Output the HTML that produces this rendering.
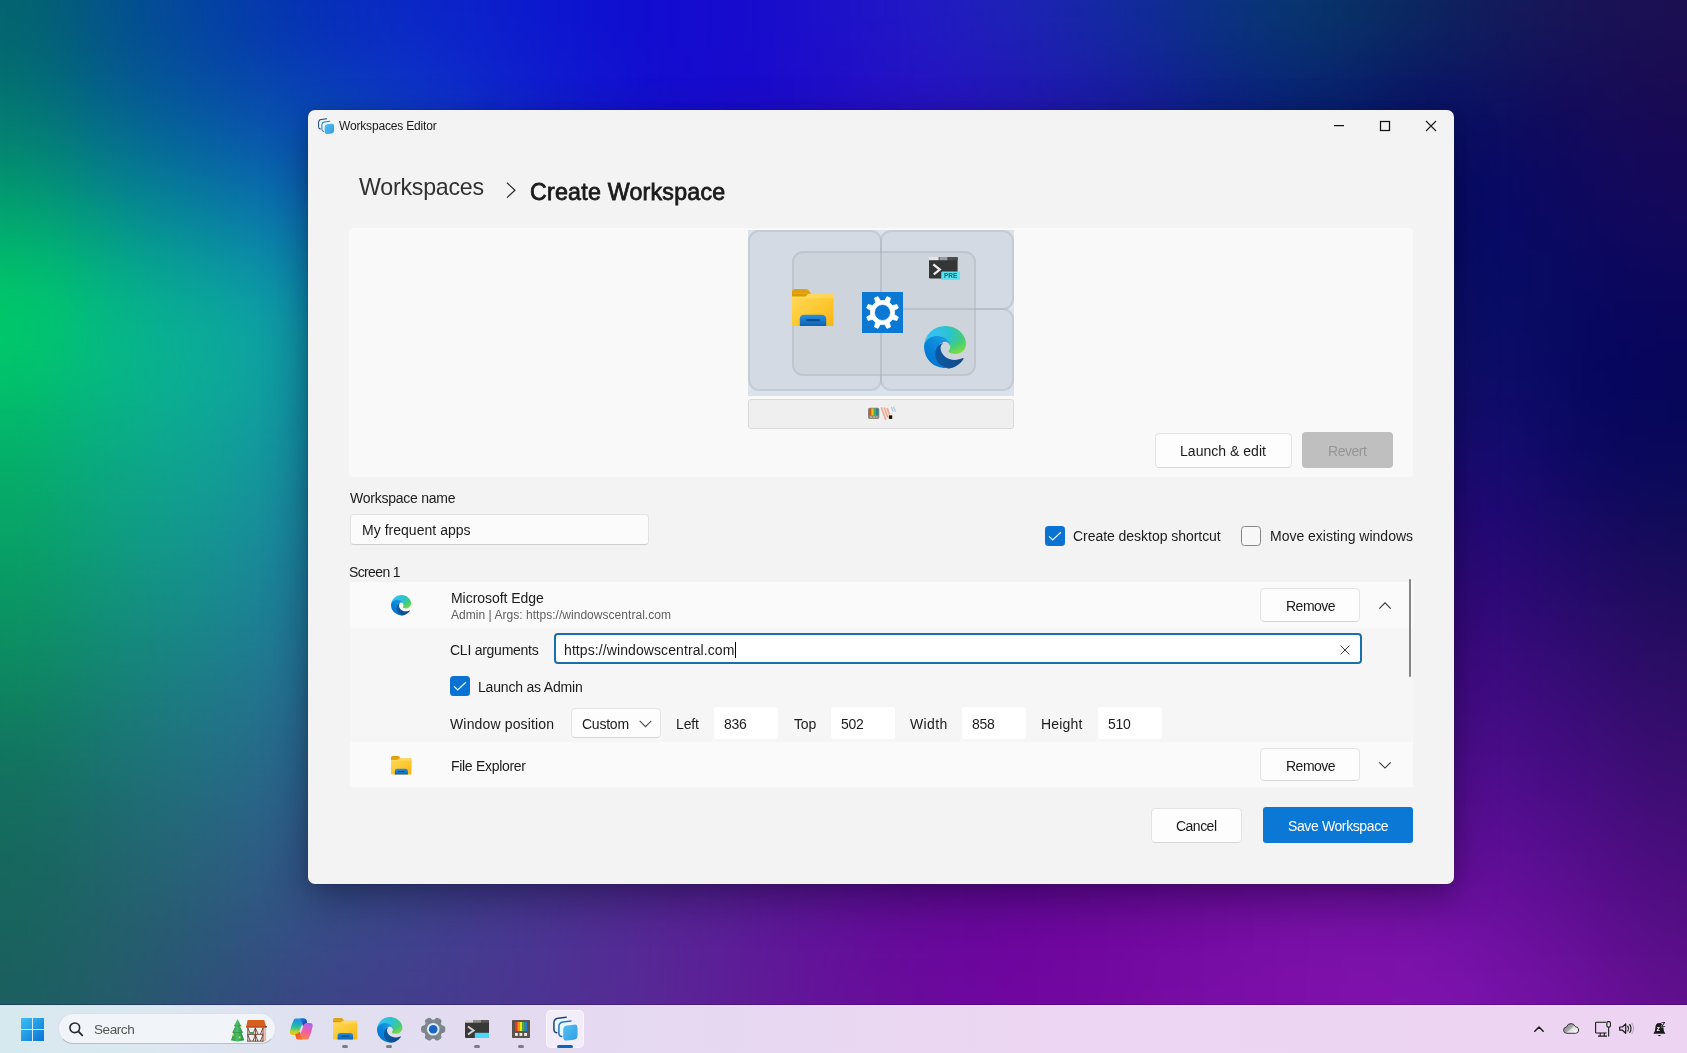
<!DOCTYPE html>
<html lang="en"><head><meta charset="utf-8"><title>Workspaces Editor</title><style>
*{margin:0;padding:0}
html,body{width:1687px;height:1053px;overflow:hidden;background:#1a1060;font-family:"Liberation Sans", sans-serif}
.desk{position:absolute;left:0;top:0;width:1687px;height:1053px;overflow:hidden}
.win{position:absolute;background:#f3f3f3;border-radius:7px;box-shadow:0 0 0 1px rgba(40,40,70,.16),0 16px 44px rgba(0,0,20,.36),0 3px 14px rgba(0,0,20,.11)}
.grp{position:absolute;left:0;top:0;width:0;height:0}
.t{position:absolute;white-space:pre;line-height:1;will-change:transform}
</style></head><body>
<div class="desk"><svg width="1687" height="1053" viewBox="0 0 1687 1053" style="position:absolute;left:0;top:0"><defs><filter id="bl" x="-10%" y="-10%" width="120%" height="120%" color-interpolation-filters="sRGB"><feGaussianBlur stdDeviation="28"/></filter></defs><g filter="url(#bl)"><rect x="-99.2" y="-100.3" width="50.2" height="50.7" fill="#03646f"/><rect x="-49.6" y="-100.3" width="50.2" height="50.7" fill="#03646f"/><rect x="0.0" y="-100.3" width="50.2" height="50.7" fill="#03646f"/><rect x="49.6" y="-100.3" width="50.2" height="50.7" fill="#035a7f"/><rect x="99.2" y="-100.3" width="50.2" height="50.7" fill="#03518e"/><rect x="148.9" y="-100.3" width="50.2" height="50.7" fill="#04489b"/><rect x="198.5" y="-100.3" width="50.2" height="50.7" fill="#0440a6"/><rect x="248.1" y="-100.3" width="50.2" height="50.7" fill="#0537af"/><rect x="297.7" y="-100.3" width="50.2" height="50.7" fill="#062fb8"/><rect x="347.3" y="-100.3" width="50.2" height="50.7" fill="#092bc1"/><rect x="396.9" y="-100.3" width="50.2" height="50.7" fill="#0b27c7"/><rect x="446.6" y="-100.3" width="50.2" height="50.7" fill="#0c21ca"/><rect x="496.2" y="-100.3" width="50.2" height="50.7" fill="#0c1bcd"/><rect x="545.8" y="-100.3" width="50.2" height="50.7" fill="#0d15cf"/><rect x="595.4" y="-100.3" width="50.2" height="50.7" fill="#0f0fd0"/><rect x="645.0" y="-100.3" width="50.2" height="50.7" fill="#130cd0"/><rect x="694.6" y="-100.3" width="50.2" height="50.7" fill="#160bce"/><rect x="744.3" y="-100.3" width="50.2" height="50.7" fill="#190dcc"/><rect x="793.9" y="-100.3" width="50.2" height="50.7" fill="#1c10ca"/><rect x="843.5" y="-100.3" width="50.2" height="50.7" fill="#2014c8"/><rect x="893.1" y="-100.3" width="50.2" height="50.7" fill="#2118c4"/><rect x="942.7" y="-100.3" width="50.2" height="50.7" fill="#201ebd"/><rect x="992.4" y="-100.3" width="50.2" height="50.7" fill="#1d23b5"/><rect x="1042.0" y="-100.3" width="50.2" height="50.7" fill="#1826ab"/><rect x="1091.6" y="-100.3" width="50.2" height="50.7" fill="#132aa0"/><rect x="1141.2" y="-100.3" width="50.2" height="50.7" fill="#0f2d92"/><rect x="1190.8" y="-100.3" width="50.2" height="50.7" fill="#0b3183"/><rect x="1240.4" y="-100.3" width="50.2" height="50.7" fill="#083576"/><rect x="1290.1" y="-100.3" width="50.2" height="50.7" fill="#08346c"/><rect x="1339.7" y="-100.3" width="50.2" height="50.7" fill="#092e65"/><rect x="1389.3" y="-100.3" width="50.2" height="50.7" fill="#0b2761"/><rect x="1438.9" y="-100.3" width="50.2" height="50.7" fill="#0f1f5e"/><rect x="1488.5" y="-100.3" width="50.2" height="50.7" fill="#14195b"/><rect x="1538.1" y="-100.3" width="50.2" height="50.7" fill="#181558"/><rect x="1587.8" y="-100.3" width="50.2" height="50.7" fill="#191255"/><rect x="1637.4" y="-100.3" width="50.2" height="50.7" fill="#1b0f52"/><rect x="1687.0" y="-100.3" width="50.2" height="50.7" fill="#1b0f52"/><rect x="1736.6" y="-100.3" width="50.2" height="50.7" fill="#1b0f52"/><rect x="-99.2" y="-50.1" width="50.2" height="50.7" fill="#03646f"/><rect x="-49.6" y="-50.1" width="50.2" height="50.7" fill="#03646f"/><rect x="0.0" y="-50.1" width="50.2" height="50.7" fill="#03646f"/><rect x="49.6" y="-50.1" width="50.2" height="50.7" fill="#035a7f"/><rect x="99.2" y="-50.1" width="50.2" height="50.7" fill="#03518e"/><rect x="148.9" y="-50.1" width="50.2" height="50.7" fill="#04489b"/><rect x="198.5" y="-50.1" width="50.2" height="50.7" fill="#0440a6"/><rect x="248.1" y="-50.1" width="50.2" height="50.7" fill="#0537af"/><rect x="297.7" y="-50.1" width="50.2" height="50.7" fill="#062fb8"/><rect x="347.3" y="-50.1" width="50.2" height="50.7" fill="#092bc1"/><rect x="396.9" y="-50.1" width="50.2" height="50.7" fill="#0b27c7"/><rect x="446.6" y="-50.1" width="50.2" height="50.7" fill="#0c21ca"/><rect x="496.2" y="-50.1" width="50.2" height="50.7" fill="#0c1bcd"/><rect x="545.8" y="-50.1" width="50.2" height="50.7" fill="#0d15cf"/><rect x="595.4" y="-50.1" width="50.2" height="50.7" fill="#0f0fd0"/><rect x="645.0" y="-50.1" width="50.2" height="50.7" fill="#130cd0"/><rect x="694.6" y="-50.1" width="50.2" height="50.7" fill="#160bce"/><rect x="744.3" y="-50.1" width="50.2" height="50.7" fill="#190dcc"/><rect x="793.9" y="-50.1" width="50.2" height="50.7" fill="#1c10ca"/><rect x="843.5" y="-50.1" width="50.2" height="50.7" fill="#2014c8"/><rect x="893.1" y="-50.1" width="50.2" height="50.7" fill="#2118c4"/><rect x="942.7" y="-50.1" width="50.2" height="50.7" fill="#201ebd"/><rect x="992.4" y="-50.1" width="50.2" height="50.7" fill="#1d23b5"/><rect x="1042.0" y="-50.1" width="50.2" height="50.7" fill="#1826ab"/><rect x="1091.6" y="-50.1" width="50.2" height="50.7" fill="#132aa0"/><rect x="1141.2" y="-50.1" width="50.2" height="50.7" fill="#0f2d92"/><rect x="1190.8" y="-50.1" width="50.2" height="50.7" fill="#0b3183"/><rect x="1240.4" y="-50.1" width="50.2" height="50.7" fill="#083576"/><rect x="1290.1" y="-50.1" width="50.2" height="50.7" fill="#08346c"/><rect x="1339.7" y="-50.1" width="50.2" height="50.7" fill="#092e65"/><rect x="1389.3" y="-50.1" width="50.2" height="50.7" fill="#0b2761"/><rect x="1438.9" y="-50.1" width="50.2" height="50.7" fill="#0f1f5e"/><rect x="1488.5" y="-50.1" width="50.2" height="50.7" fill="#14195b"/><rect x="1538.1" y="-50.1" width="50.2" height="50.7" fill="#181558"/><rect x="1587.8" y="-50.1" width="50.2" height="50.7" fill="#191255"/><rect x="1637.4" y="-50.1" width="50.2" height="50.7" fill="#1b0f52"/><rect x="1687.0" y="-50.1" width="50.2" height="50.7" fill="#1b0f52"/><rect x="1736.6" y="-50.1" width="50.2" height="50.7" fill="#1b0f52"/><rect x="-99.2" y="0.0" width="50.2" height="50.7" fill="#03646f"/><rect x="-49.6" y="0.0" width="50.2" height="50.7" fill="#03646f"/><rect x="0.0" y="0.0" width="50.2" height="50.7" fill="#03646f"/><rect x="49.6" y="0.0" width="50.2" height="50.7" fill="#035a7f"/><rect x="99.2" y="0.0" width="50.2" height="50.7" fill="#03518e"/><rect x="148.9" y="0.0" width="50.2" height="50.7" fill="#04489b"/><rect x="198.5" y="0.0" width="50.2" height="50.7" fill="#0440a6"/><rect x="248.1" y="0.0" width="50.2" height="50.7" fill="#0537af"/><rect x="297.7" y="0.0" width="50.2" height="50.7" fill="#062fb8"/><rect x="347.3" y="0.0" width="50.2" height="50.7" fill="#092bc1"/><rect x="396.9" y="0.0" width="50.2" height="50.7" fill="#0b27c7"/><rect x="446.6" y="0.0" width="50.2" height="50.7" fill="#0c21ca"/><rect x="496.2" y="0.0" width="50.2" height="50.7" fill="#0c1bcd"/><rect x="545.8" y="0.0" width="50.2" height="50.7" fill="#0d15cf"/><rect x="595.4" y="0.0" width="50.2" height="50.7" fill="#0f0fd0"/><rect x="645.0" y="0.0" width="50.2" height="50.7" fill="#130cd0"/><rect x="694.6" y="0.0" width="50.2" height="50.7" fill="#160bce"/><rect x="744.3" y="0.0" width="50.2" height="50.7" fill="#190dcc"/><rect x="793.9" y="0.0" width="50.2" height="50.7" fill="#1c10ca"/><rect x="843.5" y="0.0" width="50.2" height="50.7" fill="#2014c8"/><rect x="893.1" y="0.0" width="50.2" height="50.7" fill="#2118c4"/><rect x="942.7" y="0.0" width="50.2" height="50.7" fill="#201ebd"/><rect x="992.4" y="0.0" width="50.2" height="50.7" fill="#1d23b5"/><rect x="1042.0" y="0.0" width="50.2" height="50.7" fill="#1826ab"/><rect x="1091.6" y="0.0" width="50.2" height="50.7" fill="#132aa0"/><rect x="1141.2" y="0.0" width="50.2" height="50.7" fill="#0f2d92"/><rect x="1190.8" y="0.0" width="50.2" height="50.7" fill="#0b3183"/><rect x="1240.4" y="0.0" width="50.2" height="50.7" fill="#083576"/><rect x="1290.1" y="0.0" width="50.2" height="50.7" fill="#08346c"/><rect x="1339.7" y="0.0" width="50.2" height="50.7" fill="#092e65"/><rect x="1389.3" y="0.0" width="50.2" height="50.7" fill="#0b2761"/><rect x="1438.9" y="0.0" width="50.2" height="50.7" fill="#0f1f5e"/><rect x="1488.5" y="0.0" width="50.2" height="50.7" fill="#14195b"/><rect x="1538.1" y="0.0" width="50.2" height="50.7" fill="#181558"/><rect x="1587.8" y="0.0" width="50.2" height="50.7" fill="#191255"/><rect x="1637.4" y="0.0" width="50.2" height="50.7" fill="#1b0f52"/><rect x="1687.0" y="0.0" width="50.2" height="50.7" fill="#1b0f52"/><rect x="1736.6" y="0.0" width="50.2" height="50.7" fill="#1b0f52"/><rect x="-99.2" y="50.1" width="50.2" height="50.7" fill="#036e71"/><rect x="-49.6" y="50.1" width="50.2" height="50.7" fill="#036e71"/><rect x="0.0" y="50.1" width="50.2" height="50.7" fill="#036e71"/><rect x="49.6" y="50.1" width="50.2" height="50.7" fill="#036380"/><rect x="99.2" y="50.1" width="50.2" height="50.7" fill="#04598f"/><rect x="148.9" y="50.1" width="50.2" height="50.7" fill="#04519b"/><rect x="198.5" y="50.1" width="50.2" height="50.7" fill="#0649a5"/><rect x="248.1" y="50.1" width="50.2" height="50.7" fill="#0742af"/><rect x="297.7" y="50.1" width="50.2" height="50.7" fill="#093bb8"/><rect x="347.3" y="50.1" width="50.2" height="50.7" fill="#0b35c1"/><rect x="396.9" y="50.1" width="50.2" height="50.7" fill="#0d2fc7"/><rect x="446.6" y="50.1" width="50.2" height="50.7" fill="#0d27ca"/><rect x="496.2" y="50.1" width="50.2" height="50.7" fill="#0e1fcd"/><rect x="545.8" y="50.1" width="50.2" height="50.7" fill="#1017cf"/><rect x="595.4" y="50.1" width="50.2" height="50.7" fill="#1211d0"/><rect x="645.0" y="50.1" width="50.2" height="50.7" fill="#140cd0"/><rect x="694.6" y="50.1" width="50.2" height="50.7" fill="#170ace"/><rect x="744.3" y="50.1" width="50.2" height="50.7" fill="#1a0bcc"/><rect x="793.9" y="50.1" width="50.2" height="50.7" fill="#1e0ec9"/><rect x="843.5" y="50.1" width="50.2" height="50.7" fill="#2210c7"/><rect x="893.1" y="50.1" width="50.2" height="50.7" fill="#2514c3"/><rect x="942.7" y="50.1" width="50.2" height="50.7" fill="#2317bd"/><rect x="992.4" y="50.1" width="50.2" height="50.7" fill="#201ab5"/><rect x="1042.0" y="50.1" width="50.2" height="50.7" fill="#1c1dab"/><rect x="1091.6" y="50.1" width="50.2" height="50.7" fill="#171fa0"/><rect x="1141.2" y="50.1" width="50.2" height="50.7" fill="#112392"/><rect x="1190.8" y="50.1" width="50.2" height="50.7" fill="#0c2784"/><rect x="1240.4" y="50.1" width="50.2" height="50.7" fill="#082878"/><rect x="1290.1" y="50.1" width="50.2" height="50.7" fill="#08286e"/><rect x="1339.7" y="50.1" width="50.2" height="50.7" fill="#092268"/><rect x="1389.3" y="50.1" width="50.2" height="50.7" fill="#0a1a64"/><rect x="1438.9" y="50.1" width="50.2" height="50.7" fill="#0d1661"/><rect x="1488.5" y="50.1" width="50.2" height="50.7" fill="#11125d"/><rect x="1538.1" y="50.1" width="50.2" height="50.7" fill="#140e5a"/><rect x="1587.8" y="50.1" width="50.2" height="50.7" fill="#170d56"/><rect x="1637.4" y="50.1" width="50.2" height="50.7" fill="#1a0b52"/><rect x="1687.0" y="50.1" width="50.2" height="50.7" fill="#1a0b52"/><rect x="1736.6" y="50.1" width="50.2" height="50.7" fill="#1a0b52"/><rect x="-99.2" y="100.3" width="50.2" height="50.7" fill="#037d71"/><rect x="-49.6" y="100.3" width="50.2" height="50.7" fill="#037d71"/><rect x="0.0" y="100.3" width="50.2" height="50.7" fill="#037d71"/><rect x="49.6" y="100.3" width="50.2" height="50.7" fill="#047280"/><rect x="99.2" y="100.3" width="50.2" height="50.7" fill="#05688f"/><rect x="148.9" y="100.3" width="50.2" height="50.7" fill="#05609a"/><rect x="198.5" y="100.3" width="50.2" height="50.7" fill="#0758a5"/><rect x="248.1" y="100.3" width="50.2" height="50.7" fill="#0951ae"/><rect x="297.7" y="100.3" width="50.2" height="50.7" fill="#0a4ab6"/><rect x="347.3" y="100.3" width="50.2" height="50.7" fill="#0c41be"/><rect x="396.9" y="100.3" width="50.2" height="50.7" fill="#0d38c5"/><rect x="446.6" y="100.3" width="50.2" height="50.7" fill="#0f2fc9"/><rect x="496.2" y="100.3" width="50.2" height="50.7" fill="#1024cc"/><rect x="545.8" y="100.3" width="50.2" height="50.7" fill="#111bce"/><rect x="595.4" y="100.3" width="50.2" height="50.7" fill="#1313cf"/><rect x="645.0" y="100.3" width="50.2" height="50.7" fill="#160ece"/><rect x="694.6" y="100.3" width="50.2" height="50.7" fill="#190ccd"/><rect x="744.3" y="100.3" width="50.2" height="50.7" fill="#1c0cca"/><rect x="793.9" y="100.3" width="50.2" height="50.7" fill="#1f0dc7"/><rect x="843.5" y="100.3" width="50.2" height="50.7" fill="#230ec4"/><rect x="893.1" y="100.3" width="50.2" height="50.7" fill="#2610c0"/><rect x="942.7" y="100.3" width="50.2" height="50.7" fill="#2412ba"/><rect x="992.4" y="100.3" width="50.2" height="50.7" fill="#2214b2"/><rect x="1042.0" y="100.3" width="50.2" height="50.7" fill="#1d16a9"/><rect x="1091.6" y="100.3" width="50.2" height="50.7" fill="#19189e"/><rect x="1141.2" y="100.3" width="50.2" height="50.7" fill="#131b91"/><rect x="1190.8" y="100.3" width="50.2" height="50.7" fill="#0d1d85"/><rect x="1240.4" y="100.3" width="50.2" height="50.7" fill="#0a1d7a"/><rect x="1290.1" y="100.3" width="50.2" height="50.7" fill="#081d72"/><rect x="1339.7" y="100.3" width="50.2" height="50.7" fill="#08186c"/><rect x="1389.3" y="100.3" width="50.2" height="50.7" fill="#091268"/><rect x="1438.9" y="100.3" width="50.2" height="50.7" fill="#0a0f64"/><rect x="1488.5" y="100.3" width="50.2" height="50.7" fill="#0d0c60"/><rect x="1538.1" y="100.3" width="50.2" height="50.7" fill="#110a5c"/><rect x="1587.8" y="100.3" width="50.2" height="50.7" fill="#150a59"/><rect x="1637.4" y="100.3" width="50.2" height="50.7" fill="#180955"/><rect x="1687.0" y="100.3" width="50.2" height="50.7" fill="#180955"/><rect x="1736.6" y="100.3" width="50.2" height="50.7" fill="#180955"/><rect x="-99.2" y="150.4" width="50.2" height="50.7" fill="#029270"/><rect x="-49.6" y="150.4" width="50.2" height="50.7" fill="#029270"/><rect x="0.0" y="150.4" width="50.2" height="50.7" fill="#029270"/><rect x="49.6" y="150.4" width="50.2" height="50.7" fill="#04877f"/><rect x="99.2" y="150.4" width="50.2" height="50.7" fill="#057d8e"/><rect x="148.9" y="150.4" width="50.2" height="50.7" fill="#06749a"/><rect x="198.5" y="150.4" width="50.2" height="50.7" fill="#086ca4"/><rect x="248.1" y="150.4" width="50.2" height="50.7" fill="#0965ad"/><rect x="297.7" y="150.4" width="50.2" height="50.7" fill="#0b5bb5"/><rect x="347.3" y="150.4" width="50.2" height="50.7" fill="#0d4fbc"/><rect x="396.9" y="150.4" width="50.2" height="50.7" fill="#0e43c2"/><rect x="446.6" y="150.4" width="50.2" height="50.7" fill="#1036c6"/><rect x="496.2" y="150.4" width="50.2" height="50.7" fill="#1129ca"/><rect x="545.8" y="150.4" width="50.2" height="50.7" fill="#121ecc"/><rect x="595.4" y="150.4" width="50.2" height="50.7" fill="#1416cd"/><rect x="645.0" y="150.4" width="50.2" height="50.7" fill="#1710cc"/><rect x="694.6" y="150.4" width="50.2" height="50.7" fill="#1a0dca"/><rect x="744.3" y="150.4" width="50.2" height="50.7" fill="#1d0dc7"/><rect x="793.9" y="150.4" width="50.2" height="50.7" fill="#200dc4"/><rect x="843.5" y="150.4" width="50.2" height="50.7" fill="#230ec1"/><rect x="893.1" y="150.4" width="50.2" height="50.7" fill="#240fbc"/><rect x="942.7" y="150.4" width="50.2" height="50.7" fill="#2411b6"/><rect x="992.4" y="150.4" width="50.2" height="50.7" fill="#2112ae"/><rect x="1042.0" y="150.4" width="50.2" height="50.7" fill="#1d13a5"/><rect x="1091.6" y="150.4" width="50.2" height="50.7" fill="#19149a"/><rect x="1141.2" y="150.4" width="50.2" height="50.7" fill="#13168f"/><rect x="1190.8" y="150.4" width="50.2" height="50.7" fill="#0f1784"/><rect x="1240.4" y="150.4" width="50.2" height="50.7" fill="#0b177b"/><rect x="1290.1" y="150.4" width="50.2" height="50.7" fill="#091674"/><rect x="1339.7" y="150.4" width="50.2" height="50.7" fill="#08136e"/><rect x="1389.3" y="150.4" width="50.2" height="50.7" fill="#080f6a"/><rect x="1438.9" y="150.4" width="50.2" height="50.7" fill="#070b67"/><rect x="1488.5" y="150.4" width="50.2" height="50.7" fill="#090963"/><rect x="1538.1" y="150.4" width="50.2" height="50.7" fill="#0e095f"/><rect x="1587.8" y="150.4" width="50.2" height="50.7" fill="#12095c"/><rect x="1637.4" y="150.4" width="50.2" height="50.7" fill="#160859"/><rect x="1687.0" y="150.4" width="50.2" height="50.7" fill="#160859"/><rect x="1736.6" y="150.4" width="50.2" height="50.7" fill="#160859"/><rect x="-99.2" y="200.6" width="50.2" height="50.7" fill="#02a96e"/><rect x="-49.6" y="200.6" width="50.2" height="50.7" fill="#02a96e"/><rect x="0.0" y="200.6" width="50.2" height="50.7" fill="#02a96e"/><rect x="49.6" y="200.6" width="50.2" height="50.7" fill="#039f7c"/><rect x="99.2" y="200.6" width="50.2" height="50.7" fill="#05958b"/><rect x="148.9" y="200.6" width="50.2" height="50.7" fill="#078c98"/><rect x="198.5" y="200.6" width="50.2" height="50.7" fill="#0983a2"/><rect x="248.1" y="200.6" width="50.2" height="50.7" fill="#0b7baa"/><rect x="297.7" y="200.6" width="50.2" height="50.7" fill="#0c6eb2"/><rect x="347.3" y="200.6" width="50.2" height="50.7" fill="#0e5eb9"/><rect x="396.9" y="200.6" width="50.2" height="50.7" fill="#0f4dbf"/><rect x="446.6" y="200.6" width="50.2" height="50.7" fill="#113dc3"/><rect x="496.2" y="200.6" width="50.2" height="50.7" fill="#122ec7"/><rect x="545.8" y="200.6" width="50.2" height="50.7" fill="#1321ca"/><rect x="595.4" y="200.6" width="50.2" height="50.7" fill="#1517cb"/><rect x="645.0" y="200.6" width="50.2" height="50.7" fill="#1812c9"/><rect x="694.6" y="200.6" width="50.2" height="50.7" fill="#1b0fc7"/><rect x="744.3" y="200.6" width="50.2" height="50.7" fill="#1e0ec4"/><rect x="793.9" y="200.6" width="50.2" height="50.7" fill="#210ec1"/><rect x="843.5" y="200.6" width="50.2" height="50.7" fill="#230fbd"/><rect x="893.1" y="200.6" width="50.2" height="50.7" fill="#240fb8"/><rect x="942.7" y="200.6" width="50.2" height="50.7" fill="#2310b1"/><rect x="992.4" y="200.6" width="50.2" height="50.7" fill="#2110a9"/><rect x="1042.0" y="200.6" width="50.2" height="50.7" fill="#1d11a0"/><rect x="1091.6" y="200.6" width="50.2" height="50.7" fill="#191296"/><rect x="1141.2" y="200.6" width="50.2" height="50.7" fill="#14138c"/><rect x="1190.8" y="200.6" width="50.2" height="50.7" fill="#0f1383"/><rect x="1240.4" y="200.6" width="50.2" height="50.7" fill="#0d137b"/><rect x="1290.1" y="200.6" width="50.2" height="50.7" fill="#0b1274"/><rect x="1339.7" y="200.6" width="50.2" height="50.7" fill="#09106f"/><rect x="1389.3" y="200.6" width="50.2" height="50.7" fill="#080d6b"/><rect x="1438.9" y="200.6" width="50.2" height="50.7" fill="#070b67"/><rect x="1488.5" y="200.6" width="50.2" height="50.7" fill="#080964"/><rect x="1538.1" y="200.6" width="50.2" height="50.7" fill="#0b0960"/><rect x="1587.8" y="200.6" width="50.2" height="50.7" fill="#0f085e"/><rect x="1637.4" y="200.6" width="50.2" height="50.7" fill="#12085b"/><rect x="1687.0" y="200.6" width="50.2" height="50.7" fill="#12085b"/><rect x="1736.6" y="200.6" width="50.2" height="50.7" fill="#12085b"/><rect x="-99.2" y="250.7" width="50.2" height="50.7" fill="#00c06b"/><rect x="-49.6" y="250.7" width="50.2" height="50.7" fill="#00c06b"/><rect x="0.0" y="250.7" width="50.2" height="50.7" fill="#00c06b"/><rect x="49.6" y="250.7" width="50.2" height="50.7" fill="#02b778"/><rect x="99.2" y="250.7" width="50.2" height="50.7" fill="#05ab88"/><rect x="148.9" y="250.7" width="50.2" height="50.7" fill="#08a395"/><rect x="198.5" y="250.7" width="50.2" height="50.7" fill="#0a9a9f"/><rect x="248.1" y="250.7" width="50.2" height="50.7" fill="#0c91a8"/><rect x="297.7" y="250.7" width="50.2" height="50.7" fill="#0e7faf"/><rect x="347.3" y="250.7" width="50.2" height="50.7" fill="#106bb6"/><rect x="396.9" y="250.7" width="50.2" height="50.7" fill="#1157bb"/><rect x="446.6" y="250.7" width="50.2" height="50.7" fill="#1244c0"/><rect x="496.2" y="250.7" width="50.2" height="50.7" fill="#1333c4"/><rect x="545.8" y="250.7" width="50.2" height="50.7" fill="#1423c7"/><rect x="595.4" y="250.7" width="50.2" height="50.7" fill="#1618c8"/><rect x="645.0" y="250.7" width="50.2" height="50.7" fill="#1914c6"/><rect x="694.6" y="250.7" width="50.2" height="50.7" fill="#1d11c3"/><rect x="744.3" y="250.7" width="50.2" height="50.7" fill="#2010c0"/><rect x="793.9" y="250.7" width="50.2" height="50.7" fill="#220fbc"/><rect x="843.5" y="250.7" width="50.2" height="50.7" fill="#2310b8"/><rect x="893.1" y="250.7" width="50.2" height="50.7" fill="#2410b3"/><rect x="942.7" y="250.7" width="50.2" height="50.7" fill="#2310ac"/><rect x="992.4" y="250.7" width="50.2" height="50.7" fill="#2110a5"/><rect x="1042.0" y="250.7" width="50.2" height="50.7" fill="#1e109c"/><rect x="1091.6" y="250.7" width="50.2" height="50.7" fill="#191093"/><rect x="1141.2" y="250.7" width="50.2" height="50.7" fill="#141189"/><rect x="1190.8" y="250.7" width="50.2" height="50.7" fill="#101180"/><rect x="1240.4" y="250.7" width="50.2" height="50.7" fill="#0e117a"/><rect x="1290.1" y="250.7" width="50.2" height="50.7" fill="#0d1075"/><rect x="1339.7" y="250.7" width="50.2" height="50.7" fill="#0b0f70"/><rect x="1389.3" y="250.7" width="50.2" height="50.7" fill="#0a0e6b"/><rect x="1438.9" y="250.7" width="50.2" height="50.7" fill="#090d67"/><rect x="1488.5" y="250.7" width="50.2" height="50.7" fill="#080b63"/><rect x="1538.1" y="250.7" width="50.2" height="50.7" fill="#090961"/><rect x="1587.8" y="250.7" width="50.2" height="50.7" fill="#0b075e"/><rect x="1637.4" y="250.7" width="50.2" height="50.7" fill="#0d075c"/><rect x="1687.0" y="250.7" width="50.2" height="50.7" fill="#0d075c"/><rect x="1736.6" y="250.7" width="50.2" height="50.7" fill="#0d075c"/><rect x="-99.2" y="300.9" width="50.2" height="50.7" fill="#00c969"/><rect x="-49.6" y="300.9" width="50.2" height="50.7" fill="#00c969"/><rect x="0.0" y="300.9" width="50.2" height="50.7" fill="#00c969"/><rect x="49.6" y="300.9" width="50.2" height="50.7" fill="#02c078"/><rect x="99.2" y="300.9" width="50.2" height="50.7" fill="#06b689"/><rect x="148.9" y="300.9" width="50.2" height="50.7" fill="#09af93"/><rect x="198.5" y="300.9" width="50.2" height="50.7" fill="#0ba89c"/><rect x="248.1" y="300.9" width="50.2" height="50.7" fill="#0e9fa4"/><rect x="297.7" y="300.9" width="50.2" height="50.7" fill="#108aac"/><rect x="347.3" y="300.9" width="50.2" height="50.7" fill="#1273b2"/><rect x="396.9" y="300.9" width="50.2" height="50.7" fill="#135eb7"/><rect x="446.6" y="300.9" width="50.2" height="50.7" fill="#144abb"/><rect x="496.2" y="300.9" width="50.2" height="50.7" fill="#1638bf"/><rect x="545.8" y="300.9" width="50.2" height="50.7" fill="#1727c2"/><rect x="595.4" y="300.9" width="50.2" height="50.7" fill="#191cc2"/><rect x="645.0" y="300.9" width="50.2" height="50.7" fill="#1c17c0"/><rect x="694.6" y="300.9" width="50.2" height="50.7" fill="#1f13be"/><rect x="744.3" y="300.9" width="50.2" height="50.7" fill="#2212ba"/><rect x="793.9" y="300.9" width="50.2" height="50.7" fill="#2411b7"/><rect x="843.5" y="300.9" width="50.2" height="50.7" fill="#2511b3"/><rect x="893.1" y="300.9" width="50.2" height="50.7" fill="#2511ae"/><rect x="942.7" y="300.9" width="50.2" height="50.7" fill="#2510a8"/><rect x="992.4" y="300.9" width="50.2" height="50.7" fill="#230fa0"/><rect x="1042.0" y="300.9" width="50.2" height="50.7" fill="#200f98"/><rect x="1091.6" y="300.9" width="50.2" height="50.7" fill="#1c0f90"/><rect x="1141.2" y="300.9" width="50.2" height="50.7" fill="#170f87"/><rect x="1190.8" y="300.9" width="50.2" height="50.7" fill="#130f80"/><rect x="1240.4" y="300.9" width="50.2" height="50.7" fill="#120f7a"/><rect x="1290.1" y="300.9" width="50.2" height="50.7" fill="#110e76"/><rect x="1339.7" y="300.9" width="50.2" height="50.7" fill="#0f0e71"/><rect x="1389.3" y="300.9" width="50.2" height="50.7" fill="#0d0e6d"/><rect x="1438.9" y="300.9" width="50.2" height="50.7" fill="#0b0e68"/><rect x="1488.5" y="300.9" width="50.2" height="50.7" fill="#090c64"/><rect x="1538.1" y="300.9" width="50.2" height="50.7" fill="#080961"/><rect x="1587.8" y="300.9" width="50.2" height="50.7" fill="#07065e"/><rect x="1637.4" y="300.9" width="50.2" height="50.7" fill="#09065c"/><rect x="1687.0" y="300.9" width="50.2" height="50.7" fill="#09065c"/><rect x="1736.6" y="300.9" width="50.2" height="50.7" fill="#09065c"/><rect x="-99.2" y="351.0" width="50.2" height="50.7" fill="#01c26b"/><rect x="-49.6" y="351.0" width="50.2" height="50.7" fill="#01c26b"/><rect x="0.0" y="351.0" width="50.2" height="50.7" fill="#01c26b"/><rect x="49.6" y="351.0" width="50.2" height="50.7" fill="#04bc79"/><rect x="99.2" y="351.0" width="50.2" height="50.7" fill="#07b588"/><rect x="148.9" y="351.0" width="50.2" height="50.7" fill="#0aaf92"/><rect x="198.5" y="351.0" width="50.2" height="50.7" fill="#0da99a"/><rect x="248.1" y="351.0" width="50.2" height="50.7" fill="#0f9ea1"/><rect x="297.7" y="351.0" width="50.2" height="50.7" fill="#128ba8"/><rect x="347.3" y="351.0" width="50.2" height="50.7" fill="#1477ae"/><rect x="396.9" y="351.0" width="50.2" height="50.7" fill="#1662b2"/><rect x="446.6" y="351.0" width="50.2" height="50.7" fill="#174eb6"/><rect x="496.2" y="351.0" width="50.2" height="50.7" fill="#193cb9"/><rect x="545.8" y="351.0" width="50.2" height="50.7" fill="#1b2dba"/><rect x="595.4" y="351.0" width="50.2" height="50.7" fill="#1d22bb"/><rect x="645.0" y="351.0" width="50.2" height="50.7" fill="#201bb9"/><rect x="694.6" y="351.0" width="50.2" height="50.7" fill="#2316b7"/><rect x="744.3" y="351.0" width="50.2" height="50.7" fill="#2513b4"/><rect x="793.9" y="351.0" width="50.2" height="50.7" fill="#2712b1"/><rect x="843.5" y="351.0" width="50.2" height="50.7" fill="#2811ad"/><rect x="893.1" y="351.0" width="50.2" height="50.7" fill="#2810a8"/><rect x="942.7" y="351.0" width="50.2" height="50.7" fill="#280fa3"/><rect x="992.4" y="351.0" width="50.2" height="50.7" fill="#260e9c"/><rect x="1042.0" y="351.0" width="50.2" height="50.7" fill="#230e95"/><rect x="1091.6" y="351.0" width="50.2" height="50.7" fill="#200e8d"/><rect x="1141.2" y="351.0" width="50.2" height="50.7" fill="#1c0e86"/><rect x="1190.8" y="351.0" width="50.2" height="50.7" fill="#190d80"/><rect x="1240.4" y="351.0" width="50.2" height="50.7" fill="#170d7b"/><rect x="1290.1" y="351.0" width="50.2" height="50.7" fill="#160d77"/><rect x="1339.7" y="351.0" width="50.2" height="50.7" fill="#140d73"/><rect x="1389.3" y="351.0" width="50.2" height="50.7" fill="#120e6f"/><rect x="1438.9" y="351.0" width="50.2" height="50.7" fill="#0f0e6a"/><rect x="1488.5" y="351.0" width="50.2" height="50.7" fill="#0c0c66"/><rect x="1538.1" y="351.0" width="50.2" height="50.7" fill="#080862"/><rect x="1587.8" y="351.0" width="50.2" height="50.7" fill="#06055e"/><rect x="1637.4" y="351.0" width="50.2" height="50.7" fill="#07065b"/><rect x="1687.0" y="351.0" width="50.2" height="50.7" fill="#07065b"/><rect x="1736.6" y="351.0" width="50.2" height="50.7" fill="#07065b"/><rect x="-99.2" y="401.1" width="50.2" height="50.7" fill="#03b66a"/><rect x="-49.6" y="401.1" width="50.2" height="50.7" fill="#03b66a"/><rect x="0.0" y="401.1" width="50.2" height="50.7" fill="#03b66a"/><rect x="49.6" y="401.1" width="50.2" height="50.7" fill="#06b279"/><rect x="99.2" y="401.1" width="50.2" height="50.7" fill="#0aae87"/><rect x="148.9" y="401.1" width="50.2" height="50.7" fill="#0caa91"/><rect x="198.5" y="401.1" width="50.2" height="50.7" fill="#0fa399"/><rect x="248.1" y="401.1" width="50.2" height="50.7" fill="#1298a0"/><rect x="297.7" y="401.1" width="50.2" height="50.7" fill="#1489a5"/><rect x="347.3" y="401.1" width="50.2" height="50.7" fill="#1776aa"/><rect x="396.9" y="401.1" width="50.2" height="50.7" fill="#1963ae"/><rect x="446.6" y="401.1" width="50.2" height="50.7" fill="#1b51b0"/><rect x="496.2" y="401.1" width="50.2" height="50.7" fill="#1d40b2"/><rect x="545.8" y="401.1" width="50.2" height="50.7" fill="#1f31b3"/><rect x="595.4" y="401.1" width="50.2" height="50.7" fill="#2126b3"/><rect x="645.0" y="401.1" width="50.2" height="50.7" fill="#241eb2"/><rect x="694.6" y="401.1" width="50.2" height="50.7" fill="#2719b1"/><rect x="744.3" y="401.1" width="50.2" height="50.7" fill="#2915ae"/><rect x="793.9" y="401.1" width="50.2" height="50.7" fill="#2b13ab"/><rect x="843.5" y="401.1" width="50.2" height="50.7" fill="#2c11a7"/><rect x="893.1" y="401.1" width="50.2" height="50.7" fill="#2c10a3"/><rect x="942.7" y="401.1" width="50.2" height="50.7" fill="#2c0f9e"/><rect x="992.4" y="401.1" width="50.2" height="50.7" fill="#2a0e98"/><rect x="1042.0" y="401.1" width="50.2" height="50.7" fill="#280d92"/><rect x="1091.6" y="401.1" width="50.2" height="50.7" fill="#250d8c"/><rect x="1141.2" y="401.1" width="50.2" height="50.7" fill="#220c86"/><rect x="1190.8" y="401.1" width="50.2" height="50.7" fill="#1f0c81"/><rect x="1240.4" y="401.1" width="50.2" height="50.7" fill="#1e0c7d"/><rect x="1290.1" y="401.1" width="50.2" height="50.7" fill="#1c0c79"/><rect x="1339.7" y="401.1" width="50.2" height="50.7" fill="#1a0c76"/><rect x="1389.3" y="401.1" width="50.2" height="50.7" fill="#180d73"/><rect x="1438.9" y="401.1" width="50.2" height="50.7" fill="#150d6f"/><rect x="1488.5" y="401.1" width="50.2" height="50.7" fill="#100b6a"/><rect x="1538.1" y="401.1" width="50.2" height="50.7" fill="#0b0963"/><rect x="1587.8" y="401.1" width="50.2" height="50.7" fill="#08075e"/><rect x="1637.4" y="401.1" width="50.2" height="50.7" fill="#07075a"/><rect x="1687.0" y="401.1" width="50.2" height="50.7" fill="#07075a"/><rect x="1736.6" y="401.1" width="50.2" height="50.7" fill="#07075a"/><rect x="-99.2" y="451.3" width="50.2" height="50.7" fill="#05ac68"/><rect x="-49.6" y="451.3" width="50.2" height="50.7" fill="#05ac68"/><rect x="0.0" y="451.3" width="50.2" height="50.7" fill="#05ac68"/><rect x="49.6" y="451.3" width="50.2" height="50.7" fill="#09a978"/><rect x="99.2" y="451.3" width="50.2" height="50.7" fill="#0ca585"/><rect x="148.9" y="451.3" width="50.2" height="50.7" fill="#0fa28f"/><rect x="198.5" y="451.3" width="50.2" height="50.7" fill="#129c97"/><rect x="248.1" y="451.3" width="50.2" height="50.7" fill="#15929d"/><rect x="297.7" y="451.3" width="50.2" height="50.7" fill="#1784a2"/><rect x="347.3" y="451.3" width="50.2" height="50.7" fill="#1a74a6"/><rect x="396.9" y="451.3" width="50.2" height="50.7" fill="#1d62a9"/><rect x="446.6" y="451.3" width="50.2" height="50.7" fill="#1f52ab"/><rect x="496.2" y="451.3" width="50.2" height="50.7" fill="#2142ac"/><rect x="545.8" y="451.3" width="50.2" height="50.7" fill="#2434ac"/><rect x="595.4" y="451.3" width="50.2" height="50.7" fill="#2629ac"/><rect x="645.0" y="451.3" width="50.2" height="50.7" fill="#2920ab"/><rect x="694.6" y="451.3" width="50.2" height="50.7" fill="#2c1baa"/><rect x="744.3" y="451.3" width="50.2" height="50.7" fill="#2e16a8"/><rect x="793.9" y="451.3" width="50.2" height="50.7" fill="#3013a5"/><rect x="843.5" y="451.3" width="50.2" height="50.7" fill="#3111a2"/><rect x="893.1" y="451.3" width="50.2" height="50.7" fill="#310f9e"/><rect x="942.7" y="451.3" width="50.2" height="50.7" fill="#310e9a"/><rect x="992.4" y="451.3" width="50.2" height="50.7" fill="#2f0d95"/><rect x="1042.0" y="451.3" width="50.2" height="50.7" fill="#2d0c90"/><rect x="1091.6" y="451.3" width="50.2" height="50.7" fill="#2b0c8b"/><rect x="1141.2" y="451.3" width="50.2" height="50.7" fill="#280b85"/><rect x="1190.8" y="451.3" width="50.2" height="50.7" fill="#260b81"/><rect x="1240.4" y="451.3" width="50.2" height="50.7" fill="#250b7e"/><rect x="1290.1" y="451.3" width="50.2" height="50.7" fill="#230b7c"/><rect x="1339.7" y="451.3" width="50.2" height="50.7" fill="#220b7a"/><rect x="1389.3" y="451.3" width="50.2" height="50.7" fill="#1f0b78"/><rect x="1438.9" y="451.3" width="50.2" height="50.7" fill="#1c0a75"/><rect x="1488.5" y="451.3" width="50.2" height="50.7" fill="#170a6e"/><rect x="1538.1" y="451.3" width="50.2" height="50.7" fill="#110965"/><rect x="1587.8" y="451.3" width="50.2" height="50.7" fill="#0c095e"/><rect x="1637.4" y="451.3" width="50.2" height="50.7" fill="#0b095a"/><rect x="1687.0" y="451.3" width="50.2" height="50.7" fill="#0b095a"/><rect x="1736.6" y="451.3" width="50.2" height="50.7" fill="#0b095a"/><rect x="-99.2" y="501.4" width="50.2" height="50.7" fill="#07a466"/><rect x="-49.6" y="501.4" width="50.2" height="50.7" fill="#07a466"/><rect x="0.0" y="501.4" width="50.2" height="50.7" fill="#07a466"/><rect x="49.6" y="501.4" width="50.2" height="50.7" fill="#0ba175"/><rect x="99.2" y="501.4" width="50.2" height="50.7" fill="#0e9e82"/><rect x="148.9" y="501.4" width="50.2" height="50.7" fill="#129a8c"/><rect x="198.5" y="501.4" width="50.2" height="50.7" fill="#159495"/><rect x="248.1" y="501.4" width="50.2" height="50.7" fill="#188b9b"/><rect x="297.7" y="501.4" width="50.2" height="50.7" fill="#1b7e9f"/><rect x="347.3" y="501.4" width="50.2" height="50.7" fill="#1e70a2"/><rect x="396.9" y="501.4" width="50.2" height="50.7" fill="#2160a4"/><rect x="446.6" y="501.4" width="50.2" height="50.7" fill="#2351a6"/><rect x="496.2" y="501.4" width="50.2" height="50.7" fill="#2642a6"/><rect x="545.8" y="501.4" width="50.2" height="50.7" fill="#2934a5"/><rect x="595.4" y="501.4" width="50.2" height="50.7" fill="#2b29a5"/><rect x="645.0" y="501.4" width="50.2" height="50.7" fill="#2e22a5"/><rect x="694.6" y="501.4" width="50.2" height="50.7" fill="#311ca5"/><rect x="744.3" y="501.4" width="50.2" height="50.7" fill="#3318a3"/><rect x="793.9" y="501.4" width="50.2" height="50.7" fill="#3514a1"/><rect x="843.5" y="501.4" width="50.2" height="50.7" fill="#37119d"/><rect x="893.1" y="501.4" width="50.2" height="50.7" fill="#370f9a"/><rect x="942.7" y="501.4" width="50.2" height="50.7" fill="#370e97"/><rect x="992.4" y="501.4" width="50.2" height="50.7" fill="#360d94"/><rect x="1042.0" y="501.4" width="50.2" height="50.7" fill="#340c8f"/><rect x="1091.6" y="501.4" width="50.2" height="50.7" fill="#320b8a"/><rect x="1141.2" y="501.4" width="50.2" height="50.7" fill="#2f0b85"/><rect x="1190.8" y="501.4" width="50.2" height="50.7" fill="#2d0a81"/><rect x="1240.4" y="501.4" width="50.2" height="50.7" fill="#2c0a80"/><rect x="1290.1" y="501.4" width="50.2" height="50.7" fill="#2b0a7f"/><rect x="1339.7" y="501.4" width="50.2" height="50.7" fill="#2a0a7d"/><rect x="1389.3" y="501.4" width="50.2" height="50.7" fill="#28097b"/><rect x="1438.9" y="501.4" width="50.2" height="50.7" fill="#250978"/><rect x="1488.5" y="501.4" width="50.2" height="50.7" fill="#200971"/><rect x="1538.1" y="501.4" width="50.2" height="50.7" fill="#1a0a68"/><rect x="1587.8" y="501.4" width="50.2" height="50.7" fill="#150a5f"/><rect x="1637.4" y="501.4" width="50.2" height="50.7" fill="#120b59"/><rect x="1687.0" y="501.4" width="50.2" height="50.7" fill="#120b59"/><rect x="1736.6" y="501.4" width="50.2" height="50.7" fill="#120b59"/><rect x="-99.2" y="551.6" width="50.2" height="50.7" fill="#099b64"/><rect x="-49.6" y="551.6" width="50.2" height="50.7" fill="#099b64"/><rect x="0.0" y="551.6" width="50.2" height="50.7" fill="#099b64"/><rect x="49.6" y="551.6" width="50.2" height="50.7" fill="#0d9872"/><rect x="99.2" y="551.6" width="50.2" height="50.7" fill="#11957f"/><rect x="148.9" y="551.6" width="50.2" height="50.7" fill="#149289"/><rect x="198.5" y="551.6" width="50.2" height="50.7" fill="#178c92"/><rect x="248.1" y="551.6" width="50.2" height="50.7" fill="#1b8498"/><rect x="297.7" y="551.6" width="50.2" height="50.7" fill="#1e789c"/><rect x="347.3" y="551.6" width="50.2" height="50.7" fill="#226b9f"/><rect x="396.9" y="551.6" width="50.2" height="50.7" fill="#255da0"/><rect x="446.6" y="551.6" width="50.2" height="50.7" fill="#284fa1"/><rect x="496.2" y="551.6" width="50.2" height="50.7" fill="#2b41a1"/><rect x="545.8" y="551.6" width="50.2" height="50.7" fill="#2e35a0"/><rect x="595.4" y="551.6" width="50.2" height="50.7" fill="#312aa0"/><rect x="645.0" y="551.6" width="50.2" height="50.7" fill="#3423a0"/><rect x="694.6" y="551.6" width="50.2" height="50.7" fill="#371da0"/><rect x="744.3" y="551.6" width="50.2" height="50.7" fill="#39189f"/><rect x="793.9" y="551.6" width="50.2" height="50.7" fill="#3b159d"/><rect x="843.5" y="551.6" width="50.2" height="50.7" fill="#3d129a"/><rect x="893.1" y="551.6" width="50.2" height="50.7" fill="#3d0f98"/><rect x="942.7" y="551.6" width="50.2" height="50.7" fill="#3d0e96"/><rect x="992.4" y="551.6" width="50.2" height="50.7" fill="#3d0d93"/><rect x="1042.0" y="551.6" width="50.2" height="50.7" fill="#3b0c90"/><rect x="1091.6" y="551.6" width="50.2" height="50.7" fill="#3a0b8c"/><rect x="1141.2" y="551.6" width="50.2" height="50.7" fill="#380a87"/><rect x="1190.8" y="551.6" width="50.2" height="50.7" fill="#360a84"/><rect x="1240.4" y="551.6" width="50.2" height="50.7" fill="#350a83"/><rect x="1290.1" y="551.6" width="50.2" height="50.7" fill="#340a82"/><rect x="1339.7" y="551.6" width="50.2" height="50.7" fill="#330a81"/><rect x="1389.3" y="551.6" width="50.2" height="50.7" fill="#31097e"/><rect x="1438.9" y="551.6" width="50.2" height="50.7" fill="#2e097a"/><rect x="1488.5" y="551.6" width="50.2" height="50.7" fill="#290974"/><rect x="1538.1" y="551.6" width="50.2" height="50.7" fill="#240a6b"/><rect x="1587.8" y="551.6" width="50.2" height="50.7" fill="#1f0b62"/><rect x="1637.4" y="551.6" width="50.2" height="50.7" fill="#1b0c5b"/><rect x="1687.0" y="551.6" width="50.2" height="50.7" fill="#1b0c5b"/><rect x="1736.6" y="551.6" width="50.2" height="50.7" fill="#1b0c5b"/><rect x="-99.2" y="601.7" width="50.2" height="50.7" fill="#0b9162"/><rect x="-49.6" y="601.7" width="50.2" height="50.7" fill="#0b9162"/><rect x="0.0" y="601.7" width="50.2" height="50.7" fill="#0b9162"/><rect x="49.6" y="601.7" width="50.2" height="50.7" fill="#0f8f6f"/><rect x="99.2" y="601.7" width="50.2" height="50.7" fill="#138c7b"/><rect x="148.9" y="601.7" width="50.2" height="50.7" fill="#178985"/><rect x="198.5" y="601.7" width="50.2" height="50.7" fill="#1a848e"/><rect x="248.1" y="601.7" width="50.2" height="50.7" fill="#1e7c95"/><rect x="297.7" y="601.7" width="50.2" height="50.7" fill="#227298"/><rect x="347.3" y="601.7" width="50.2" height="50.7" fill="#26669b"/><rect x="396.9" y="601.7" width="50.2" height="50.7" fill="#295a9c"/><rect x="446.6" y="601.7" width="50.2" height="50.7" fill="#2d4d9d"/><rect x="496.2" y="601.7" width="50.2" height="50.7" fill="#31409d"/><rect x="545.8" y="601.7" width="50.2" height="50.7" fill="#34359d"/><rect x="595.4" y="601.7" width="50.2" height="50.7" fill="#372c9d"/><rect x="645.0" y="601.7" width="50.2" height="50.7" fill="#3a249d"/><rect x="694.6" y="601.7" width="50.2" height="50.7" fill="#3d1e9d"/><rect x="744.3" y="601.7" width="50.2" height="50.7" fill="#3f199c"/><rect x="793.9" y="601.7" width="50.2" height="50.7" fill="#41159b"/><rect x="843.5" y="601.7" width="50.2" height="50.7" fill="#431299"/><rect x="893.1" y="601.7" width="50.2" height="50.7" fill="#441098"/><rect x="942.7" y="601.7" width="50.2" height="50.7" fill="#440e96"/><rect x="992.4" y="601.7" width="50.2" height="50.7" fill="#440c94"/><rect x="1042.0" y="601.7" width="50.2" height="50.7" fill="#430b91"/><rect x="1091.6" y="601.7" width="50.2" height="50.7" fill="#420b8f"/><rect x="1141.2" y="601.7" width="50.2" height="50.7" fill="#410a8c"/><rect x="1190.8" y="601.7" width="50.2" height="50.7" fill="#400a8a"/><rect x="1240.4" y="601.7" width="50.2" height="50.7" fill="#3f0a88"/><rect x="1290.1" y="601.7" width="50.2" height="50.7" fill="#3e0a87"/><rect x="1339.7" y="601.7" width="50.2" height="50.7" fill="#3c0a85"/><rect x="1389.3" y="601.7" width="50.2" height="50.7" fill="#3a0a83"/><rect x="1438.9" y="601.7" width="50.2" height="50.7" fill="#37097e"/><rect x="1488.5" y="601.7" width="50.2" height="50.7" fill="#320a78"/><rect x="1538.1" y="601.7" width="50.2" height="50.7" fill="#2d0b70"/><rect x="1587.8" y="601.7" width="50.2" height="50.7" fill="#280c67"/><rect x="1637.4" y="601.7" width="50.2" height="50.7" fill="#240c5f"/><rect x="1687.0" y="601.7" width="50.2" height="50.7" fill="#240c5f"/><rect x="1736.6" y="601.7" width="50.2" height="50.7" fill="#240c5f"/><rect x="-99.2" y="651.9" width="50.2" height="50.7" fill="#0d8760"/><rect x="-49.6" y="651.9" width="50.2" height="50.7" fill="#0d8760"/><rect x="0.0" y="651.9" width="50.2" height="50.7" fill="#0d8760"/><rect x="49.6" y="651.9" width="50.2" height="50.7" fill="#12846c"/><rect x="99.2" y="651.9" width="50.2" height="50.7" fill="#168277"/><rect x="148.9" y="651.9" width="50.2" height="50.7" fill="#1a7f82"/><rect x="198.5" y="651.9" width="50.2" height="50.7" fill="#1e7b8b"/><rect x="248.1" y="651.9" width="50.2" height="50.7" fill="#227591"/><rect x="297.7" y="651.9" width="50.2" height="50.7" fill="#266c95"/><rect x="347.3" y="651.9" width="50.2" height="50.7" fill="#2a6197"/><rect x="396.9" y="651.9" width="50.2" height="50.7" fill="#2e5699"/><rect x="446.6" y="651.9" width="50.2" height="50.7" fill="#324a9a"/><rect x="496.2" y="651.9" width="50.2" height="50.7" fill="#363f9a"/><rect x="545.8" y="651.9" width="50.2" height="50.7" fill="#3a359a"/><rect x="595.4" y="651.9" width="50.2" height="50.7" fill="#3e2c9a"/><rect x="645.0" y="651.9" width="50.2" height="50.7" fill="#40249a"/><rect x="694.6" y="651.9" width="50.2" height="50.7" fill="#431e9b"/><rect x="744.3" y="651.9" width="50.2" height="50.7" fill="#45199a"/><rect x="793.9" y="651.9" width="50.2" height="50.7" fill="#48159a"/><rect x="843.5" y="651.9" width="50.2" height="50.7" fill="#491299"/><rect x="893.1" y="651.9" width="50.2" height="50.7" fill="#4b0f98"/><rect x="942.7" y="651.9" width="50.2" height="50.7" fill="#4b0d97"/><rect x="992.4" y="651.9" width="50.2" height="50.7" fill="#4c0c95"/><rect x="1042.0" y="651.9" width="50.2" height="50.7" fill="#4c0b94"/><rect x="1091.6" y="651.9" width="50.2" height="50.7" fill="#4b0b92"/><rect x="1141.2" y="651.9" width="50.2" height="50.7" fill="#4b0b91"/><rect x="1190.8" y="651.9" width="50.2" height="50.7" fill="#4a0b8f"/><rect x="1240.4" y="651.9" width="50.2" height="50.7" fill="#490b8e"/><rect x="1290.1" y="651.9" width="50.2" height="50.7" fill="#480b8d"/><rect x="1339.7" y="651.9" width="50.2" height="50.7" fill="#460a8b"/><rect x="1389.3" y="651.9" width="50.2" height="50.7" fill="#430a88"/><rect x="1438.9" y="651.9" width="50.2" height="50.7" fill="#400a84"/><rect x="1488.5" y="651.9" width="50.2" height="50.7" fill="#3b0b7d"/><rect x="1538.1" y="651.9" width="50.2" height="50.7" fill="#350c76"/><rect x="1587.8" y="651.9" width="50.2" height="50.7" fill="#300c6d"/><rect x="1637.4" y="651.9" width="50.2" height="50.7" fill="#2c0d65"/><rect x="1687.0" y="651.9" width="50.2" height="50.7" fill="#2c0d65"/><rect x="1736.6" y="651.9" width="50.2" height="50.7" fill="#2c0d65"/><rect x="-99.2" y="702.0" width="50.2" height="50.7" fill="#107b5f"/><rect x="-49.6" y="702.0" width="50.2" height="50.7" fill="#107b5f"/><rect x="0.0" y="702.0" width="50.2" height="50.7" fill="#107b5f"/><rect x="49.6" y="702.0" width="50.2" height="50.7" fill="#147a6a"/><rect x="99.2" y="702.0" width="50.2" height="50.7" fill="#197975"/><rect x="148.9" y="702.0" width="50.2" height="50.7" fill="#1d777f"/><rect x="198.5" y="702.0" width="50.2" height="50.7" fill="#217387"/><rect x="248.1" y="702.0" width="50.2" height="50.7" fill="#256d8d"/><rect x="297.7" y="702.0" width="50.2" height="50.7" fill="#2a6591"/><rect x="347.3" y="702.0" width="50.2" height="50.7" fill="#2e5c94"/><rect x="396.9" y="702.0" width="50.2" height="50.7" fill="#325296"/><rect x="446.6" y="702.0" width="50.2" height="50.7" fill="#374797"/><rect x="496.2" y="702.0" width="50.2" height="50.7" fill="#3c3d97"/><rect x="545.8" y="702.0" width="50.2" height="50.7" fill="#403397"/><rect x="595.4" y="702.0" width="50.2" height="50.7" fill="#442b97"/><rect x="645.0" y="702.0" width="50.2" height="50.7" fill="#472498"/><rect x="694.6" y="702.0" width="50.2" height="50.7" fill="#491f99"/><rect x="744.3" y="702.0" width="50.2" height="50.7" fill="#4b1a99"/><rect x="793.9" y="702.0" width="50.2" height="50.7" fill="#4e1599"/><rect x="843.5" y="702.0" width="50.2" height="50.7" fill="#501299"/><rect x="893.1" y="702.0" width="50.2" height="50.7" fill="#510f99"/><rect x="942.7" y="702.0" width="50.2" height="50.7" fill="#520d98"/><rect x="992.4" y="702.0" width="50.2" height="50.7" fill="#530c97"/><rect x="1042.0" y="702.0" width="50.2" height="50.7" fill="#540b97"/><rect x="1091.6" y="702.0" width="50.2" height="50.7" fill="#540b96"/><rect x="1141.2" y="702.0" width="50.2" height="50.7" fill="#550b96"/><rect x="1190.8" y="702.0" width="50.2" height="50.7" fill="#550b95"/><rect x="1240.4" y="702.0" width="50.2" height="50.7" fill="#540b94"/><rect x="1290.1" y="702.0" width="50.2" height="50.7" fill="#520b92"/><rect x="1339.7" y="702.0" width="50.2" height="50.7" fill="#4f0b90"/><rect x="1389.3" y="702.0" width="50.2" height="50.7" fill="#4c0b8e"/><rect x="1438.9" y="702.0" width="50.2" height="50.7" fill="#480c89"/><rect x="1488.5" y="702.0" width="50.2" height="50.7" fill="#430c83"/><rect x="1538.1" y="702.0" width="50.2" height="50.7" fill="#3e0c7c"/><rect x="1587.8" y="702.0" width="50.2" height="50.7" fill="#380d74"/><rect x="1637.4" y="702.0" width="50.2" height="50.7" fill="#340d6b"/><rect x="1687.0" y="702.0" width="50.2" height="50.7" fill="#340d6b"/><rect x="1736.6" y="702.0" width="50.2" height="50.7" fill="#340d6b"/><rect x="-99.2" y="752.1" width="50.2" height="50.7" fill="#12715e"/><rect x="-49.6" y="752.1" width="50.2" height="50.7" fill="#12715e"/><rect x="0.0" y="752.1" width="50.2" height="50.7" fill="#12715e"/><rect x="49.6" y="752.1" width="50.2" height="50.7" fill="#177169"/><rect x="99.2" y="752.1" width="50.2" height="50.7" fill="#1c7073"/><rect x="148.9" y="752.1" width="50.2" height="50.7" fill="#206f7c"/><rect x="198.5" y="752.1" width="50.2" height="50.7" fill="#246c84"/><rect x="248.1" y="752.1" width="50.2" height="50.7" fill="#29678a"/><rect x="297.7" y="752.1" width="50.2" height="50.7" fill="#2d5f8e"/><rect x="347.3" y="752.1" width="50.2" height="50.7" fill="#325691"/><rect x="396.9" y="752.1" width="50.2" height="50.7" fill="#374d93"/><rect x="446.6" y="752.1" width="50.2" height="50.7" fill="#3b4494"/><rect x="496.2" y="752.1" width="50.2" height="50.7" fill="#403b95"/><rect x="545.8" y="752.1" width="50.2" height="50.7" fill="#453295"/><rect x="595.4" y="752.1" width="50.2" height="50.7" fill="#4a2a95"/><rect x="645.0" y="752.1" width="50.2" height="50.7" fill="#4c2497"/><rect x="694.6" y="752.1" width="50.2" height="50.7" fill="#4e1f98"/><rect x="744.3" y="752.1" width="50.2" height="50.7" fill="#511999"/><rect x="793.9" y="752.1" width="50.2" height="50.7" fill="#531599"/><rect x="843.5" y="752.1" width="50.2" height="50.7" fill="#56129a"/><rect x="893.1" y="752.1" width="50.2" height="50.7" fill="#580f9a"/><rect x="942.7" y="752.1" width="50.2" height="50.7" fill="#590c99"/><rect x="992.4" y="752.1" width="50.2" height="50.7" fill="#5a0b99"/><rect x="1042.0" y="752.1" width="50.2" height="50.7" fill="#5b0a99"/><rect x="1091.6" y="752.1" width="50.2" height="50.7" fill="#5d0a9a"/><rect x="1141.2" y="752.1" width="50.2" height="50.7" fill="#5e0b9a"/><rect x="1190.8" y="752.1" width="50.2" height="50.7" fill="#5f0c9b"/><rect x="1240.4" y="752.1" width="50.2" height="50.7" fill="#5d0c99"/><rect x="1290.1" y="752.1" width="50.2" height="50.7" fill="#5c0c98"/><rect x="1339.7" y="752.1" width="50.2" height="50.7" fill="#590d96"/><rect x="1389.3" y="752.1" width="50.2" height="50.7" fill="#560d94"/><rect x="1438.9" y="752.1" width="50.2" height="50.7" fill="#510d90"/><rect x="1488.5" y="752.1" width="50.2" height="50.7" fill="#4c0d8a"/><rect x="1538.1" y="752.1" width="50.2" height="50.7" fill="#460c83"/><rect x="1587.8" y="752.1" width="50.2" height="50.7" fill="#410d7a"/><rect x="1637.4" y="752.1" width="50.2" height="50.7" fill="#3b0d72"/><rect x="1687.0" y="752.1" width="50.2" height="50.7" fill="#3b0d72"/><rect x="1736.6" y="752.1" width="50.2" height="50.7" fill="#3b0d72"/><rect x="-99.2" y="802.3" width="50.2" height="50.7" fill="#156b5e"/><rect x="-49.6" y="802.3" width="50.2" height="50.7" fill="#156b5e"/><rect x="0.0" y="802.3" width="50.2" height="50.7" fill="#156b5e"/><rect x="49.6" y="802.3" width="50.2" height="50.7" fill="#1a6a67"/><rect x="99.2" y="802.3" width="50.2" height="50.7" fill="#1f6970"/><rect x="148.9" y="802.3" width="50.2" height="50.7" fill="#236879"/><rect x="198.5" y="802.3" width="50.2" height="50.7" fill="#286480"/><rect x="248.1" y="802.3" width="50.2" height="50.7" fill="#2c5f87"/><rect x="297.7" y="802.3" width="50.2" height="50.7" fill="#31588b"/><rect x="347.3" y="802.3" width="50.2" height="50.7" fill="#36518f"/><rect x="396.9" y="802.3" width="50.2" height="50.7" fill="#3a4991"/><rect x="446.6" y="802.3" width="50.2" height="50.7" fill="#3f4192"/><rect x="496.2" y="802.3" width="50.2" height="50.7" fill="#443993"/><rect x="545.8" y="802.3" width="50.2" height="50.7" fill="#493194"/><rect x="595.4" y="802.3" width="50.2" height="50.7" fill="#4d2a95"/><rect x="645.0" y="802.3" width="50.2" height="50.7" fill="#502496"/><rect x="694.6" y="802.3" width="50.2" height="50.7" fill="#531f97"/><rect x="744.3" y="802.3" width="50.2" height="50.7" fill="#561998"/><rect x="793.9" y="802.3" width="50.2" height="50.7" fill="#581499"/><rect x="843.5" y="802.3" width="50.2" height="50.7" fill="#5b109a"/><rect x="893.1" y="802.3" width="50.2" height="50.7" fill="#5d0d9a"/><rect x="942.7" y="802.3" width="50.2" height="50.7" fill="#5f0b9a"/><rect x="992.4" y="802.3" width="50.2" height="50.7" fill="#610a9b"/><rect x="1042.0" y="802.3" width="50.2" height="50.7" fill="#62099b"/><rect x="1091.6" y="802.3" width="50.2" height="50.7" fill="#640a9c"/><rect x="1141.2" y="802.3" width="50.2" height="50.7" fill="#660b9d"/><rect x="1190.8" y="802.3" width="50.2" height="50.7" fill="#670c9e"/><rect x="1240.4" y="802.3" width="50.2" height="50.7" fill="#670d9e"/><rect x="1290.1" y="802.3" width="50.2" height="50.7" fill="#660d9e"/><rect x="1339.7" y="802.3" width="50.2" height="50.7" fill="#640e9c"/><rect x="1389.3" y="802.3" width="50.2" height="50.7" fill="#600e9a"/><rect x="1438.9" y="802.3" width="50.2" height="50.7" fill="#5b0e96"/><rect x="1488.5" y="802.3" width="50.2" height="50.7" fill="#560d91"/><rect x="1538.1" y="802.3" width="50.2" height="50.7" fill="#500d8a"/><rect x="1587.8" y="802.3" width="50.2" height="50.7" fill="#4a0d81"/><rect x="1637.4" y="802.3" width="50.2" height="50.7" fill="#440d78"/><rect x="1687.0" y="802.3" width="50.2" height="50.7" fill="#440d78"/><rect x="1736.6" y="802.3" width="50.2" height="50.7" fill="#440d78"/><rect x="-99.2" y="852.4" width="50.2" height="50.7" fill="#17665e"/><rect x="-49.6" y="852.4" width="50.2" height="50.7" fill="#17665e"/><rect x="0.0" y="852.4" width="50.2" height="50.7" fill="#17665e"/><rect x="49.6" y="852.4" width="50.2" height="50.7" fill="#1c6565"/><rect x="99.2" y="852.4" width="50.2" height="50.7" fill="#22646d"/><rect x="148.9" y="852.4" width="50.2" height="50.7" fill="#266176"/><rect x="198.5" y="852.4" width="50.2" height="50.7" fill="#2b5e7d"/><rect x="248.1" y="852.4" width="50.2" height="50.7" fill="#2f5884"/><rect x="297.7" y="852.4" width="50.2" height="50.7" fill="#345289"/><rect x="347.3" y="852.4" width="50.2" height="50.7" fill="#394c8d"/><rect x="396.9" y="852.4" width="50.2" height="50.7" fill="#3d458f"/><rect x="446.6" y="852.4" width="50.2" height="50.7" fill="#423e91"/><rect x="496.2" y="852.4" width="50.2" height="50.7" fill="#463892"/><rect x="545.8" y="852.4" width="50.2" height="50.7" fill="#4b3193"/><rect x="595.4" y="852.4" width="50.2" height="50.7" fill="#4f2b94"/><rect x="645.0" y="852.4" width="50.2" height="50.7" fill="#532596"/><rect x="694.6" y="852.4" width="50.2" height="50.7" fill="#571f97"/><rect x="744.3" y="852.4" width="50.2" height="50.7" fill="#5a1998"/><rect x="793.9" y="852.4" width="50.2" height="50.7" fill="#5d1499"/><rect x="843.5" y="852.4" width="50.2" height="50.7" fill="#5f0f9a"/><rect x="893.1" y="852.4" width="50.2" height="50.7" fill="#620b9b"/><rect x="942.7" y="852.4" width="50.2" height="50.7" fill="#64099b"/><rect x="992.4" y="852.4" width="50.2" height="50.7" fill="#66089c"/><rect x="1042.0" y="852.4" width="50.2" height="50.7" fill="#68089d"/><rect x="1091.6" y="852.4" width="50.2" height="50.7" fill="#6a099e"/><rect x="1141.2" y="852.4" width="50.2" height="50.7" fill="#6c0b9f"/><rect x="1190.8" y="852.4" width="50.2" height="50.7" fill="#6e0ca1"/><rect x="1240.4" y="852.4" width="50.2" height="50.7" fill="#6f0da2"/><rect x="1290.1" y="852.4" width="50.2" height="50.7" fill="#6f0ea2"/><rect x="1339.7" y="852.4" width="50.2" height="50.7" fill="#6e0fa2"/><rect x="1389.3" y="852.4" width="50.2" height="50.7" fill="#6b0fa1"/><rect x="1438.9" y="852.4" width="50.2" height="50.7" fill="#660e9d"/><rect x="1488.5" y="852.4" width="50.2" height="50.7" fill="#600e97"/><rect x="1538.1" y="852.4" width="50.2" height="50.7" fill="#5a0e90"/><rect x="1587.8" y="852.4" width="50.2" height="50.7" fill="#530d87"/><rect x="1637.4" y="852.4" width="50.2" height="50.7" fill="#4c0d7f"/><rect x="1687.0" y="852.4" width="50.2" height="50.7" fill="#4c0d7f"/><rect x="1736.6" y="852.4" width="50.2" height="50.7" fill="#4c0d7f"/><rect x="-99.2" y="902.6" width="50.2" height="50.7" fill="#18635e"/><rect x="-49.6" y="902.6" width="50.2" height="50.7" fill="#18635e"/><rect x="0.0" y="902.6" width="50.2" height="50.7" fill="#18635e"/><rect x="49.6" y="902.6" width="50.2" height="50.7" fill="#1e6165"/><rect x="99.2" y="902.6" width="50.2" height="50.7" fill="#235f6c"/><rect x="148.9" y="902.6" width="50.2" height="50.7" fill="#285b74"/><rect x="198.5" y="902.6" width="50.2" height="50.7" fill="#2d577c"/><rect x="248.1" y="902.6" width="50.2" height="50.7" fill="#325283"/><rect x="297.7" y="902.6" width="50.2" height="50.7" fill="#384c88"/><rect x="347.3" y="902.6" width="50.2" height="50.7" fill="#3c468b"/><rect x="396.9" y="902.6" width="50.2" height="50.7" fill="#40418e"/><rect x="446.6" y="902.6" width="50.2" height="50.7" fill="#443c90"/><rect x="496.2" y="902.6" width="50.2" height="50.7" fill="#493792"/><rect x="545.8" y="902.6" width="50.2" height="50.7" fill="#4d3193"/><rect x="595.4" y="902.6" width="50.2" height="50.7" fill="#522b94"/><rect x="645.0" y="902.6" width="50.2" height="50.7" fill="#562595"/><rect x="694.6" y="902.6" width="50.2" height="50.7" fill="#5a1f97"/><rect x="744.3" y="902.6" width="50.2" height="50.7" fill="#5d1998"/><rect x="793.9" y="902.6" width="50.2" height="50.7" fill="#601399"/><rect x="843.5" y="902.6" width="50.2" height="50.7" fill="#630e9a"/><rect x="893.1" y="902.6" width="50.2" height="50.7" fill="#660a9b"/><rect x="942.7" y="902.6" width="50.2" height="50.7" fill="#69079c"/><rect x="992.4" y="902.6" width="50.2" height="50.7" fill="#6b069d"/><rect x="1042.0" y="902.6" width="50.2" height="50.7" fill="#6d079e"/><rect x="1091.6" y="902.6" width="50.2" height="50.7" fill="#6f099f"/><rect x="1141.2" y="902.6" width="50.2" height="50.7" fill="#710aa1"/><rect x="1190.8" y="902.6" width="50.2" height="50.7" fill="#740ca3"/><rect x="1240.4" y="902.6" width="50.2" height="50.7" fill="#760ea5"/><rect x="1290.1" y="902.6" width="50.2" height="50.7" fill="#7810a7"/><rect x="1339.7" y="902.6" width="50.2" height="50.7" fill="#7710a7"/><rect x="1389.3" y="902.6" width="50.2" height="50.7" fill="#7611a7"/><rect x="1438.9" y="902.6" width="50.2" height="50.7" fill="#7110a4"/><rect x="1488.5" y="902.6" width="50.2" height="50.7" fill="#6a0f9e"/><rect x="1538.1" y="902.6" width="50.2" height="50.7" fill="#640f97"/><rect x="1587.8" y="902.6" width="50.2" height="50.7" fill="#5c0e8e"/><rect x="1637.4" y="902.6" width="50.2" height="50.7" fill="#550e85"/><rect x="1687.0" y="902.6" width="50.2" height="50.7" fill="#550e85"/><rect x="1736.6" y="902.6" width="50.2" height="50.7" fill="#550e85"/><rect x="-99.2" y="952.7" width="50.2" height="50.7" fill="#1a605f"/><rect x="-49.6" y="952.7" width="50.2" height="50.7" fill="#1a605f"/><rect x="0.0" y="952.7" width="50.2" height="50.7" fill="#1a605f"/><rect x="49.6" y="952.7" width="50.2" height="50.7" fill="#1f5f65"/><rect x="99.2" y="952.7" width="50.2" height="50.7" fill="#255c6c"/><rect x="148.9" y="952.7" width="50.2" height="50.7" fill="#295674"/><rect x="198.5" y="952.7" width="50.2" height="50.7" fill="#2f517b"/><rect x="248.1" y="952.7" width="50.2" height="50.7" fill="#354c82"/><rect x="297.7" y="952.7" width="50.2" height="50.7" fill="#3b4688"/><rect x="347.3" y="952.7" width="50.2" height="50.7" fill="#3f428b"/><rect x="396.9" y="952.7" width="50.2" height="50.7" fill="#433e8d"/><rect x="446.6" y="952.7" width="50.2" height="50.7" fill="#463a8f"/><rect x="496.2" y="952.7" width="50.2" height="50.7" fill="#4a3692"/><rect x="545.8" y="952.7" width="50.2" height="50.7" fill="#4e3193"/><rect x="595.4" y="952.7" width="50.2" height="50.7" fill="#542b94"/><rect x="645.0" y="952.7" width="50.2" height="50.7" fill="#582595"/><rect x="694.6" y="952.7" width="50.2" height="50.7" fill="#5c1f97"/><rect x="744.3" y="952.7" width="50.2" height="50.7" fill="#601998"/><rect x="793.9" y="952.7" width="50.2" height="50.7" fill="#631399"/><rect x="843.5" y="952.7" width="50.2" height="50.7" fill="#660d9a"/><rect x="893.1" y="952.7" width="50.2" height="50.7" fill="#69099c"/><rect x="942.7" y="952.7" width="50.2" height="50.7" fill="#6c069d"/><rect x="992.4" y="952.7" width="50.2" height="50.7" fill="#6f059e"/><rect x="1042.0" y="952.7" width="50.2" height="50.7" fill="#71079f"/><rect x="1091.6" y="952.7" width="50.2" height="50.7" fill="#7309a0"/><rect x="1141.2" y="952.7" width="50.2" height="50.7" fill="#760ba2"/><rect x="1190.8" y="952.7" width="50.2" height="50.7" fill="#780da5"/><rect x="1240.4" y="952.7" width="50.2" height="50.7" fill="#7b0ea7"/><rect x="1290.1" y="952.7" width="50.2" height="50.7" fill="#7d10a9"/><rect x="1339.7" y="952.7" width="50.2" height="50.7" fill="#7e11aa"/><rect x="1389.3" y="952.7" width="50.2" height="50.7" fill="#7d12ab"/><rect x="1438.9" y="952.7" width="50.2" height="50.7" fill="#7912a9"/><rect x="1488.5" y="952.7" width="50.2" height="50.7" fill="#7311a4"/><rect x="1538.1" y="952.7" width="50.2" height="50.7" fill="#6d109e"/><rect x="1587.8" y="952.7" width="50.2" height="50.7" fill="#650f95"/><rect x="1637.4" y="952.7" width="50.2" height="50.7" fill="#5d0f8b"/><rect x="1687.0" y="952.7" width="50.2" height="50.7" fill="#5d0f8b"/><rect x="1736.6" y="952.7" width="50.2" height="50.7" fill="#5d0f8b"/><rect x="-99.2" y="1002.9" width="50.2" height="50.7" fill="#1c5e60"/><rect x="-49.6" y="1002.9" width="50.2" height="50.7" fill="#1c5e60"/><rect x="0.0" y="1002.9" width="50.2" height="50.7" fill="#1c5e60"/><rect x="49.6" y="1002.9" width="50.2" height="50.7" fill="#215c66"/><rect x="99.2" y="1002.9" width="50.2" height="50.7" fill="#27586c"/><rect x="148.9" y="1002.9" width="50.2" height="50.7" fill="#2b5274"/><rect x="198.5" y="1002.9" width="50.2" height="50.7" fill="#314d7b"/><rect x="248.1" y="1002.9" width="50.2" height="50.7" fill="#374881"/><rect x="297.7" y="1002.9" width="50.2" height="50.7" fill="#3d4386"/><rect x="347.3" y="1002.9" width="50.2" height="50.7" fill="#413f89"/><rect x="396.9" y="1002.9" width="50.2" height="50.7" fill="#453b8c"/><rect x="446.6" y="1002.9" width="50.2" height="50.7" fill="#48388e"/><rect x="496.2" y="1002.9" width="50.2" height="50.7" fill="#4c3491"/><rect x="545.8" y="1002.9" width="50.2" height="50.7" fill="#513093"/><rect x="595.4" y="1002.9" width="50.2" height="50.7" fill="#552a94"/><rect x="645.0" y="1002.9" width="50.2" height="50.7" fill="#5a2595"/><rect x="694.6" y="1002.9" width="50.2" height="50.7" fill="#5e1f96"/><rect x="744.3" y="1002.9" width="50.2" height="50.7" fill="#621998"/><rect x="793.9" y="1002.9" width="50.2" height="50.7" fill="#651499"/><rect x="843.5" y="1002.9" width="50.2" height="50.7" fill="#690f9b"/><rect x="893.1" y="1002.9" width="50.2" height="50.7" fill="#6c0b9c"/><rect x="942.7" y="1002.9" width="50.2" height="50.7" fill="#6f089d"/><rect x="992.4" y="1002.9" width="50.2" height="50.7" fill="#72079e"/><rect x="1042.0" y="1002.9" width="50.2" height="50.7" fill="#7408a0"/><rect x="1091.6" y="1002.9" width="50.2" height="50.7" fill="#7609a1"/><rect x="1141.2" y="1002.9" width="50.2" height="50.7" fill="#790ba3"/><rect x="1190.8" y="1002.9" width="50.2" height="50.7" fill="#7b0da5"/><rect x="1240.4" y="1002.9" width="50.2" height="50.7" fill="#7e0fa8"/><rect x="1290.1" y="1002.9" width="50.2" height="50.7" fill="#7f10a9"/><rect x="1339.7" y="1002.9" width="50.2" height="50.7" fill="#8011ab"/><rect x="1389.3" y="1002.9" width="50.2" height="50.7" fill="#7f12ab"/><rect x="1438.9" y="1002.9" width="50.2" height="50.7" fill="#7c12aa"/><rect x="1488.5" y="1002.9" width="50.2" height="50.7" fill="#7711a6"/><rect x="1538.1" y="1002.9" width="50.2" height="50.7" fill="#7211a0"/><rect x="1587.8" y="1002.9" width="50.2" height="50.7" fill="#6b1099"/><rect x="1637.4" y="1002.9" width="50.2" height="50.7" fill="#63108f"/><rect x="1687.0" y="1002.9" width="50.2" height="50.7" fill="#63108f"/><rect x="1736.6" y="1002.9" width="50.2" height="50.7" fill="#63108f"/><rect x="-99.2" y="1053.0" width="50.2" height="50.7" fill="#1c5e60"/><rect x="-49.6" y="1053.0" width="50.2" height="50.7" fill="#1c5e60"/><rect x="0.0" y="1053.0" width="50.2" height="50.7" fill="#1c5e60"/><rect x="49.6" y="1053.0" width="50.2" height="50.7" fill="#215c66"/><rect x="99.2" y="1053.0" width="50.2" height="50.7" fill="#27586c"/><rect x="148.9" y="1053.0" width="50.2" height="50.7" fill="#2b5274"/><rect x="198.5" y="1053.0" width="50.2" height="50.7" fill="#314d7b"/><rect x="248.1" y="1053.0" width="50.2" height="50.7" fill="#374881"/><rect x="297.7" y="1053.0" width="50.2" height="50.7" fill="#3d4386"/><rect x="347.3" y="1053.0" width="50.2" height="50.7" fill="#413f89"/><rect x="396.9" y="1053.0" width="50.2" height="50.7" fill="#453b8c"/><rect x="446.6" y="1053.0" width="50.2" height="50.7" fill="#48388e"/><rect x="496.2" y="1053.0" width="50.2" height="50.7" fill="#4c3491"/><rect x="545.8" y="1053.0" width="50.2" height="50.7" fill="#513093"/><rect x="595.4" y="1053.0" width="50.2" height="50.7" fill="#552a94"/><rect x="645.0" y="1053.0" width="50.2" height="50.7" fill="#5a2595"/><rect x="694.6" y="1053.0" width="50.2" height="50.7" fill="#5e1f96"/><rect x="744.3" y="1053.0" width="50.2" height="50.7" fill="#621998"/><rect x="793.9" y="1053.0" width="50.2" height="50.7" fill="#651499"/><rect x="843.5" y="1053.0" width="50.2" height="50.7" fill="#690f9b"/><rect x="893.1" y="1053.0" width="50.2" height="50.7" fill="#6c0b9c"/><rect x="942.7" y="1053.0" width="50.2" height="50.7" fill="#6f089d"/><rect x="992.4" y="1053.0" width="50.2" height="50.7" fill="#72079e"/><rect x="1042.0" y="1053.0" width="50.2" height="50.7" fill="#7408a0"/><rect x="1091.6" y="1053.0" width="50.2" height="50.7" fill="#7609a1"/><rect x="1141.2" y="1053.0" width="50.2" height="50.7" fill="#790ba3"/><rect x="1190.8" y="1053.0" width="50.2" height="50.7" fill="#7b0da5"/><rect x="1240.4" y="1053.0" width="50.2" height="50.7" fill="#7e0fa8"/><rect x="1290.1" y="1053.0" width="50.2" height="50.7" fill="#7f10a9"/><rect x="1339.7" y="1053.0" width="50.2" height="50.7" fill="#8011ab"/><rect x="1389.3" y="1053.0" width="50.2" height="50.7" fill="#7f12ab"/><rect x="1438.9" y="1053.0" width="50.2" height="50.7" fill="#7c12aa"/><rect x="1488.5" y="1053.0" width="50.2" height="50.7" fill="#7711a6"/><rect x="1538.1" y="1053.0" width="50.2" height="50.7" fill="#7211a0"/><rect x="1587.8" y="1053.0" width="50.2" height="50.7" fill="#6b1099"/><rect x="1637.4" y="1053.0" width="50.2" height="50.7" fill="#63108f"/><rect x="1687.0" y="1053.0" width="50.2" height="50.7" fill="#63108f"/><rect x="1736.6" y="1053.0" width="50.2" height="50.7" fill="#63108f"/><rect x="-99.2" y="1103.1" width="50.2" height="50.7" fill="#1c5e60"/><rect x="-49.6" y="1103.1" width="50.2" height="50.7" fill="#1c5e60"/><rect x="0.0" y="1103.1" width="50.2" height="50.7" fill="#1c5e60"/><rect x="49.6" y="1103.1" width="50.2" height="50.7" fill="#215c66"/><rect x="99.2" y="1103.1" width="50.2" height="50.7" fill="#27586c"/><rect x="148.9" y="1103.1" width="50.2" height="50.7" fill="#2b5274"/><rect x="198.5" y="1103.1" width="50.2" height="50.7" fill="#314d7b"/><rect x="248.1" y="1103.1" width="50.2" height="50.7" fill="#374881"/><rect x="297.7" y="1103.1" width="50.2" height="50.7" fill="#3d4386"/><rect x="347.3" y="1103.1" width="50.2" height="50.7" fill="#413f89"/><rect x="396.9" y="1103.1" width="50.2" height="50.7" fill="#453b8c"/><rect x="446.6" y="1103.1" width="50.2" height="50.7" fill="#48388e"/><rect x="496.2" y="1103.1" width="50.2" height="50.7" fill="#4c3491"/><rect x="545.8" y="1103.1" width="50.2" height="50.7" fill="#513093"/><rect x="595.4" y="1103.1" width="50.2" height="50.7" fill="#552a94"/><rect x="645.0" y="1103.1" width="50.2" height="50.7" fill="#5a2595"/><rect x="694.6" y="1103.1" width="50.2" height="50.7" fill="#5e1f96"/><rect x="744.3" y="1103.1" width="50.2" height="50.7" fill="#621998"/><rect x="793.9" y="1103.1" width="50.2" height="50.7" fill="#651499"/><rect x="843.5" y="1103.1" width="50.2" height="50.7" fill="#690f9b"/><rect x="893.1" y="1103.1" width="50.2" height="50.7" fill="#6c0b9c"/><rect x="942.7" y="1103.1" width="50.2" height="50.7" fill="#6f089d"/><rect x="992.4" y="1103.1" width="50.2" height="50.7" fill="#72079e"/><rect x="1042.0" y="1103.1" width="50.2" height="50.7" fill="#7408a0"/><rect x="1091.6" y="1103.1" width="50.2" height="50.7" fill="#7609a1"/><rect x="1141.2" y="1103.1" width="50.2" height="50.7" fill="#790ba3"/><rect x="1190.8" y="1103.1" width="50.2" height="50.7" fill="#7b0da5"/><rect x="1240.4" y="1103.1" width="50.2" height="50.7" fill="#7e0fa8"/><rect x="1290.1" y="1103.1" width="50.2" height="50.7" fill="#7f10a9"/><rect x="1339.7" y="1103.1" width="50.2" height="50.7" fill="#8011ab"/><rect x="1389.3" y="1103.1" width="50.2" height="50.7" fill="#7f12ab"/><rect x="1438.9" y="1103.1" width="50.2" height="50.7" fill="#7c12aa"/><rect x="1488.5" y="1103.1" width="50.2" height="50.7" fill="#7711a6"/><rect x="1538.1" y="1103.1" width="50.2" height="50.7" fill="#7211a0"/><rect x="1587.8" y="1103.1" width="50.2" height="50.7" fill="#6b1099"/><rect x="1637.4" y="1103.1" width="50.2" height="50.7" fill="#63108f"/><rect x="1687.0" y="1103.1" width="50.2" height="50.7" fill="#63108f"/><rect x="1736.6" y="1103.1" width="50.2" height="50.7" fill="#63108f"/></g></svg></div>
<section class="grp" role="dialog" aria-label="Workspaces Editor">
<div class="win" style="left:308px;top:110px;width:1146px;height:773.5px"></div>
<svg style="position:absolute;left:317.7px;top:117.5px;overflow:visible;" width="16.4" height="16.4" viewBox="0 0 25 25" ><defs><linearGradient id="g1" x1="0" y1="0" x2="1" y2="1"><stop offset="0" stop-color="#52bff2"/><stop offset="1" stop-color="#2f9fe2"/></linearGradient></defs>
<g transform="translate(0 1.600) skewY(-7)">
<path d="M13.300 1.200 H5 Q.9 1.200 .9 5.300 V11.500 Q.9 15 3.800 15.600 L12 15 L15 6z" fill="rgba(232,249,253,.85)" stroke="none"/><path d="M18 5.600 H10 Q5.900 5.600 5.900 9.700 V16 Q5.900 19.400 8.800 20 L14 19 L19 10z" fill="rgba(232,249,253,.85)" stroke="none"/><path d="M13.300 1.200 H5 Q.9 1.200 .9 5.300 V11.500 Q.9 15 3.800 15.600" fill="none" stroke="#1c4272" stroke-width="1.500" stroke-linecap="round"/>
<path d="M18 5.600 H10 Q5.900 5.600 5.900 9.700 V16 Q5.900 19.400 8.800 20" fill="none" stroke="#2a72ba" stroke-width="1.500" stroke-linecap="round"/>
<rect x="10.200" y="9.600" width="14.300" height="15" rx="3.800" fill="url(#g1)"/>
</g></svg>
<span class="t" style="left:339.2px;top:120px;font-size:12px;color:#1a1a1a;letter-spacing:-0.170px;">Workspaces Editor</span>
<svg style="position:absolute;left:1333px;top:120px" width="105" height="12" viewBox="0 0 105 12"><path d="M1 5.600H11" stroke="#111" stroke-width="1.250"/><rect x="47.500" y="1.500" width="9" height="9" fill="none" stroke="#111" stroke-width="1.250"/><path d="M93 1 L103 11 M103 1 L93 11" stroke="#1a1a1a" stroke-width="1.100"/></svg>
<span class="t" style="left:358.6px;top:176px;font-size:23.2px;color:#303030;letter-spacing:-0.226px;">Workspaces</span>
<svg style="position:absolute;left:505px;top:181px" width="12" height="18" viewBox="0 0 12 18"><path d="M2 1.800 L10 9.200 L2 16.600" fill="none" stroke="#2a2a2a" stroke-width="1.200"/></svg>
<span class="t" style="left:529.6px;top:181px;font-size:23.2px;color:#1a1a1a;letter-spacing:0.238px;-webkit-text-stroke:.8px #1a1a1a;">Create Workspace</span>
<div style="position:absolute;left:349px;top:227.8px;width:1064px;height:249.4px;background:#f9f9f9;border-radius:4px"></div>
<div style="position:absolute;left:748px;top:230px;width:266px;height:165.5px;background:#dae3ec"></div>
<div style="position:absolute;left:748px;top:230px;width:133.5px;height:160.5px;background:rgba(196,200,206,.30);border:2px solid rgba(148,155,168,.25);border-radius:11px;box-sizing:border-box"></div>
<div style="position:absolute;left:880px;top:230px;width:134px;height:79.5px;background:rgba(196,200,206,.30);border:2px solid rgba(148,155,168,.25);border-radius:11px;box-sizing:border-box"></div>
<div style="position:absolute;left:880px;top:308px;width:134px;height:82.5px;background:rgba(196,200,206,.30);border:2px solid rgba(148,155,168,.25);border-radius:11px;box-sizing:border-box"></div>
<div style="position:absolute;left:791.5px;top:251px;width:184.5px;height:125px;background:rgba(196,200,206,.30);border:2px solid rgba(148,155,168,.25);border-radius:11px;box-sizing:border-box"></div>
<svg style="position:absolute;left:792px;top:289px;overflow:visible;" width="41.5" height="37" viewBox="0 0 40 36" preserveAspectRatio="none"><defs><linearGradient id="g2" x1="0" y1="0" x2="1" y2="1"><stop offset="0" stop-color="#ffd95c"/><stop offset=".55" stop-color="#fdc830"/><stop offset="1" stop-color="#f8b414"/></linearGradient>
<linearGradient id="g3" x1="0" y1="0" x2="0" y2="1"><stop offset="0" stop-color="#2590e2"/><stop offset="1" stop-color="#0e62b2"/></linearGradient></defs>
<path d="M0 3 Q0 0 3 0 H13 Q15 0 16 1.200 L19 5 V9 H0z" fill="#dfa20c"/>
<rect x="0" y="4.600" width="40" height="31.400" rx="1.500" fill="url(#g2)"/>
<path d="M0 7.200 H15 L17.500 4.600 H38.500 Q40 4.600 40 6.100 V9 H0z" fill="#ffdf70" opacity=".55"/>
<path d="M0 4.600 H15.500 L13 7.200 H0z" fill="#d99a0a"/>
<path d="M7.500 36 V29.500 Q7.500 25 12 25 H28.500 Q33 25 33 29.500 V36z" fill="url(#g3)"/>
<rect x="13.500" y="29.300" width="13.500" height="2" rx="1" fill="#0a4c90"/></svg>
<svg style="position:absolute;left:862px;top:292px;overflow:visible;" width="41" height="41" viewBox="0 0 41 41" ><rect width="41" height="41" fill="#0b78d4"/><path d="M32.43 17.93 L36.89 18.56 L36.89 22.44 L32.43 23.07 L30.75 27.12 L33.46 30.72 L30.72 33.46 L27.12 30.75 L23.07 32.43 L22.44 36.89 L18.56 36.89 L17.93 32.43 L13.88 30.75 L10.28 33.46 L7.54 30.72 L10.25 27.12 L8.57 23.07 L4.11 22.44 L4.11 18.56 L8.57 17.93 L10.25 13.88 L7.54 10.28 L10.28 7.54 L13.88 10.25 L17.93 8.57 L18.56 4.11 L22.44 4.11 L23.07 8.57 L27.12 10.25 L30.72 7.54 L33.46 10.28 L30.75 13.88Z M28.50 20.50 A8 8 0 1 0 12.50 20.50 A8 8 0 1 0 28.50 20.50Z" fill="#fff" fill-rule="evenodd" stroke="#fff" stroke-width=".6" stroke-linejoin="round" transform="rotate(22.5 20.5 20.5)"/></svg>
<svg style="position:absolute;left:929px;top:257px;overflow:visible;will-change:transform" width="31" height="23" viewBox="0 0 31 23" preserveAspectRatio="none"><rect x="0" y="0" width="28.600" height="21.600" rx="1" fill="#333536"/>
<rect x="0" y="0" width="28.600" height="3.200" fill="#4c4c4c"/><rect x="0" y="0" width="9.600" height="3.200" fill="#e6e6e6"/><rect x="10.500" y="0" width="7.800" height="3.200" fill="#9c9c9c"/>
<path d="M4.300 7.300 L10.800 12.600 L4.800 17.300" fill="none" stroke="#ececec" stroke-width="2.300"/>
<rect x="12.300" y="14.600" width="18.700" height="8.400" rx="1" fill="#5ee4f0"/>
<text x="21.700" y="21.200" font-family="Liberation Sans, sans-serif" font-size="6.500" font-weight="700" fill="#0c6478" text-anchor="middle">PRE</text></svg>
<svg style="position:absolute;left:924px;top:326.3px;overflow:visible;" width="42" height="42" viewBox="0 0 256 256" ><defs>
<linearGradient id="g4" x1="63" y1="177" x2="241" y2="177" gradientUnits="userSpaceOnUse"><stop offset="0" stop-color="#0c59a4"/><stop offset="1" stop-color="#114a8b"/></linearGradient>
<linearGradient id="g5" x1="157" y1="100" x2="46" y2="221" gradientUnits="userSpaceOnUse"><stop offset="0" stop-color="#1b9de2"/><stop offset=".16" stop-color="#1595df"/><stop offset=".67" stop-color="#0680d7"/><stop offset="1" stop-color="#0078d4"/></linearGradient>
<radialGradient id="g6" cx="0" cy="0" r="1" gradientUnits="userSpaceOnUse" gradientTransform="matrix(-8 202 -431 -17 26 47)"><stop offset="0" stop-color="#35c1f1"/><stop offset=".11" stop-color="#34c1ed"/><stop offset=".23" stop-color="#2fc2df"/><stop offset=".31" stop-color="#2bc3d2"/><stop offset=".5" stop-color="#45cc78"/><stop offset=".66" stop-color="#74da4c"/><stop offset=".85" stop-color="#8ae04a"/></radialGradient>
</defs>
<path fill="url(#g4)" d="M235.7 195.5a93.7 93.7 0 0 1-10.6 4.7 101.9 101.9 0 0 1-35.9 6.4c-47.3 0-88.500-32.500-88.500-74.300a31.500 31.500 0 0 1 16.400-27.300c-42.800 1.800-53.800 46.400-53.800 72.500 0 74 68.100 81.400 82.800 81.400 7.900 0 19.800-2.300 27-4.600l1.300-.4a128.300 128.300 0 0 0 66.600-52.800 4 4 0 0 0-5.300-5.600z"/>
<path fill="url(#g5)" d="M105.700 241.400a79.200 79.200 0 0 1-22.700-21.300 80.700 80.700 0 0 1 29.500-120c3.200-1.500 8.500-4.100 15.600-4a32.400 32.400 0 0 1 25.700 13 31.900 31.900 0 0 1 6.300 18.700c0-.2 24.500-79.600-80-79.600-43.900 0-80 41.600-80 78.200a130.200 130.200 0 0 0 12.100 56 128 128 0 0 0 156.400 67 75.500 75.500 0 0 1-62.800-8z"/>
<path fill="url(#g6)" d="M152.300 148.900c-.9 1-3.400 2.500-3.400 5.600 0 2.600 1.700 5.200 4.800 7.300 14.300 10 41.400 8.600 41.500 8.600a59.600 59.600 0 0 0 30.300-8.300 61.400 61.400 0 0 0 30.400-52.900c.3-22.400-8-37.300-11.300-43.900C223.500 24.100 178.200 0 128 0A128 128 0 0 0 0 126.200c.5-36.500 36.800-66 80-66 3.500 0 23.500.3 42 10 16.300 8.600 24.900 19 30.800 29.300 6.200 10.700 7.300 24.100 7.300 29.500 0 5.300-2.700 13.300-7.800 19.900z"/></svg>
<div style="position:absolute;left:748px;top:399px;width:266px;height:30px;background:#efefef;border:1.5px solid #dadada;border-radius:3px;box-sizing:border-box"></div>
<svg style="position:absolute;left:867px;top:406px" width="30" height="14" viewBox="0 0 30 14"><rect x="1" y="1.800" width="11.300" height="11.100" rx="1.600" fill="#8c8678"/><rect x="2" y="2.600" width="2.400" height="6.800" fill="#d8561e"/><rect x="4.400" y="2.600" width="2.400" height="6.800" fill="#e6c41e"/><rect x="6.800" y="2.600" width="2.300" height="6.800" fill="#46ae4e"/><rect x="9.100" y="2.600" width="2.300" height="6.800" fill="#1f869e"/><path d="M3 11 H10.500" stroke="#d8d4c8" stroke-width="1.200" stroke-dasharray="2 1"/><path d="M14.300 1.200 L18.800 13.800 M17.300 1.500 L20.800 11.500 M20.200 2 L22.300 8.500" fill="none" stroke="#eca285" stroke-width="1.700" opacity=".9"/><rect x="21.900" y="9.300" width="3.300" height="3.600" fill="#1c0c02"/><path d="M24.300 1 L26.300 5.500 M26.500 .8 L28.600 5.800" stroke="#8aa8d0" stroke-width="1.300" opacity=".55"/></svg>
<div role="button" aria-label="Launch &amp; edit" style="position:absolute;left:1154.5px;top:432.5px;width:137px;height:35px;background:#fdfdfd;border:1.500px solid #e3e3e3;border-bottom-color:#d6d6d6;border-radius:4.500px;box-sizing:border-box"></div>
<span class="t" style="left:1180px;top:444px;font-size:14px;color:#1b1b1b;letter-spacing:0.029px;">Launch &amp; edit</span>
<div role="button" aria-disabled="true" aria-label="Revert" style="position:absolute;left:1302px;top:432px;width:91px;height:36px;background:#bfbfbf;border-radius:4px"></div>
<span class="t" style="left:1328.3px;top:444px;font-size:14px;color:#969696;letter-spacing:-0.472px;">Revert</span>
<span class="t" style="left:349.6px;top:491px;font-size:14px;color:#1b1b1b;letter-spacing:-0.249px;">Workspace name</span>
<div style="position:absolute;left:349.5px;top:514px;width:299px;height:31px;background:#fbfbfb;border:1px solid #e3e3e3;border-bottom-color:#cdcdcd;border-radius:4px;box-sizing:border-box"></div>
<span class="t" style="left:361.6px;top:523px;font-size:14px;color:#1b1b1b;letter-spacing:0.027px;">My frequent apps</span>
<div role="checkbox" aria-checked="true" style="position:absolute;left:1045px;top:526px;width:20px;height:20px;background:#0a72d2;border-radius:3.500px"><svg width="20" height="20" viewBox="0 0 20 20" style="position:absolute;left:0;top:0"><path d="M4.100 10.400 L7.700 14 L15.900 6.200" fill="none" stroke="#e6f7ff" stroke-width="1.250"/></svg></div>
<span class="t" style="left:1073.4px;top:529px;font-size:14px;color:#1b1b1b;letter-spacing:-0.041px;">Create desktop shortcut</span>
<div role="checkbox" aria-checked="false" style="position:absolute;left:1241px;top:526px;width:20px;height:20px;background:#f7f7f7;border:1px solid #868686;border-radius:3.500px;box-sizing:border-box"></div>
<span class="t" style="left:1269.5px;top:529px;font-size:14px;color:#1b1b1b;letter-spacing:-0.008px;">Move existing windows</span>
<span class="t" style="left:349.4px;top:565px;font-size:14px;color:#1b1b1b;letter-spacing:-0.631px;">Screen 1</span>
<div style="position:absolute;left:349.5px;top:582px;width:1063.5px;height:46px;background:#fafafa"></div>
<div style="position:absolute;left:349.5px;top:628px;width:1063.5px;height:113.8px;background:#f6f6f6"></div>
<div style="position:absolute;left:349.5px;top:741.8px;width:1063.5px;height:45.2px;background:#fafafa"></div>
<svg style="position:absolute;left:391px;top:595px;overflow:visible;" width="20.2" height="20.2" viewBox="0 0 256 256" ><defs>
<linearGradient id="g7" x1="63" y1="177" x2="241" y2="177" gradientUnits="userSpaceOnUse"><stop offset="0" stop-color="#0c59a4"/><stop offset="1" stop-color="#114a8b"/></linearGradient>
<linearGradient id="g8" x1="157" y1="100" x2="46" y2="221" gradientUnits="userSpaceOnUse"><stop offset="0" stop-color="#1b9de2"/><stop offset=".16" stop-color="#1595df"/><stop offset=".67" stop-color="#0680d7"/><stop offset="1" stop-color="#0078d4"/></linearGradient>
<radialGradient id="g9" cx="0" cy="0" r="1" gradientUnits="userSpaceOnUse" gradientTransform="matrix(-8 202 -431 -17 26 47)"><stop offset="0" stop-color="#35c1f1"/><stop offset=".11" stop-color="#34c1ed"/><stop offset=".23" stop-color="#2fc2df"/><stop offset=".31" stop-color="#2bc3d2"/><stop offset=".5" stop-color="#45cc78"/><stop offset=".66" stop-color="#74da4c"/><stop offset=".85" stop-color="#8ae04a"/></radialGradient>
</defs>
<path fill="url(#g7)" d="M235.7 195.5a93.7 93.7 0 0 1-10.6 4.7 101.9 101.9 0 0 1-35.9 6.4c-47.3 0-88.500-32.500-88.500-74.300a31.500 31.500 0 0 1 16.400-27.300c-42.800 1.800-53.800 46.400-53.800 72.500 0 74 68.100 81.400 82.800 81.400 7.900 0 19.800-2.300 27-4.600l1.300-.4a128.300 128.300 0 0 0 66.600-52.800 4 4 0 0 0-5.300-5.600z"/>
<path fill="url(#g8)" d="M105.700 241.400a79.200 79.200 0 0 1-22.700-21.300 80.700 80.700 0 0 1 29.500-120c3.200-1.500 8.500-4.100 15.600-4a32.400 32.400 0 0 1 25.700 13 31.900 31.900 0 0 1 6.300 18.700c0-.2 24.500-79.600-80-79.600-43.900 0-80 41.600-80 78.200a130.200 130.200 0 0 0 12.100 56 128 128 0 0 0 156.400 67 75.500 75.500 0 0 1-62.800-8z"/>
<path fill="url(#g9)" d="M152.300 148.900c-.9 1-3.400 2.500-3.400 5.600 0 2.600 1.700 5.200 4.800 7.300 14.300 10 41.400 8.600 41.500 8.600a59.600 59.600 0 0 0 30.300-8.300 61.400 61.400 0 0 0 30.400-52.900c.3-22.400-8-37.300-11.300-43.900C223.500 24.100 178.200 0 128 0A128 128 0 0 0 0 126.200c.5-36.500 36.800-66 80-66 3.500 0 23.500.3 42 10 16.300 8.600 24.900 19 30.800 29.300 6.200 10.700 7.300 24.100 7.300 29.500 0 5.300-2.700 13.300-7.800 19.900z"/></svg>
<span class="t" style="left:451.4px;top:591px;font-size:14px;color:#1b1b1b;letter-spacing:-0.041px;">Microsoft Edge</span>
<span class="t" style="left:451.4px;top:609px;font-size:12px;color:#606060;letter-spacing:0.036px;">Admin | Args: https://windowscentral.com</span>
<div role="button" aria-label="Remove" style="position:absolute;left:1259.7px;top:588.4px;width:100.6px;height:33.2px;background:#fdfdfd;border:1.500px solid #e3e3e3;border-bottom-color:#d6d6d6;border-radius:4.500px;box-sizing:border-box"></div>
<span class="t" style="left:1286px;top:599px;font-size:14px;color:#1b1b1b;letter-spacing:-0.507px;">Remove</span>
<svg style="position:absolute;left:1378px;top:600.800px" width="14" height="9" viewBox="0 0 14 9"><path d="M1.300 7.600 L7 1.800 L12.700 7.600" fill="none" stroke="#333" stroke-width="1.050"/></svg>
<div style="position:absolute;left:1409.2px;top:578.5px;width:2.2px;height:98.5px;background:#858585;border-radius:1px"></div>
<span class="t" style="left:450.3px;top:643px;font-size:14px;color:#1b1b1b;letter-spacing:-0.256px;">CLI arguments</span>
<div style="position:absolute;left:554px;top:633.3px;width:807.5px;height:31.2px;background:#fff;border:2px solid #1c6ea8;border-radius:4px;box-sizing:border-box"></div>
<span class="t" style="left:564.3px;top:643px;font-size:14px;color:#1b1b1b;letter-spacing:0.093px;">https://windowscentral.com</span>
<div style="position:absolute;left:735.3px;top:641.5px;width:1.2px;height:16.5px;background:#000"></div>
<svg style="position:absolute;left:1340px;top:644.500px" width="10" height="10" viewBox="0 0 10 10"><path d="M.6 .6 L9.400 9.400 M9.400 .6 L.6 9.400" stroke="#3a3a3a" stroke-width="1"/></svg>
<div role="checkbox" aria-checked="true" style="position:absolute;left:450px;top:676px;width:20px;height:20px;background:#0a72d2;border-radius:3.500px"><svg width="20" height="20" viewBox="0 0 20 20" style="position:absolute;left:0;top:0"><path d="M4.100 10.400 L7.700 14 L15.900 6.200" fill="none" stroke="#e6f7ff" stroke-width="1.250"/></svg></div>
<span class="t" style="left:478.3px;top:680px;font-size:14px;color:#1b1b1b;letter-spacing:-0.187px;">Launch as Admin</span>
<span class="t" style="left:450.3px;top:717px;font-size:14px;color:#1b1b1b;letter-spacing:0.151px;">Window position</span>
<div role="combobox" aria-label="Window position" style="position:absolute;left:570.5px;top:707.5px;width:90px;height:30.5px;background:#fdfdfd;border:1.500px solid #e3e3e3;border-bottom-color:#d6d6d6;border-radius:4.500px;box-sizing:border-box"></div>
<span class="t" style="left:582px;top:717px;font-size:14px;color:#1b1b1b;letter-spacing:-0.239px;">Custom</span>
<svg style="position:absolute;left:638.500px;top:719.800px" width="13" height="8" viewBox="0 0 13 8"><path d="M.7 .8 L6.500 6.700 L12.300 .8" fill="none" stroke="#4a4a4a" stroke-width="1.100"/></svg>
<span class="t" style="left:676.3px;top:717px;font-size:14px;color:#1b1b1b;letter-spacing:-0.140px;">Left</span>
<div role="spinbutton" aria-label="Left" style="position:absolute;left:714px;top:707px;width:64px;height:31.5px;background:#fff;border-radius:3px"></div>
<span class="t" style="left:724.1px;top:717px;font-size:14px;color:#1b1b1b;letter-spacing:-0.286px;">836</span>
<span class="t" style="left:793.5px;top:717px;font-size:14px;color:#1b1b1b;letter-spacing:-0.126px;">Top</span>
<div role="spinbutton" aria-label="Top" style="position:absolute;left:831px;top:707px;width:64px;height:31.5px;background:#fff;border-radius:3px"></div>
<span class="t" style="left:841.3px;top:717px;font-size:14px;color:#1b1b1b;letter-spacing:-0.286px;">502</span>
<span class="t" style="left:909.7px;top:717px;font-size:14px;color:#1b1b1b;letter-spacing:0.361px;">Width</span>
<div role="spinbutton" aria-label="Width" style="position:absolute;left:962px;top:707px;width:64px;height:31.5px;background:#fff;border-radius:3px"></div>
<span class="t" style="left:972.3px;top:717px;font-size:14px;color:#1b1b1b;letter-spacing:-0.286px;">858</span>
<span class="t" style="left:1041.3px;top:717px;font-size:14px;color:#1b1b1b;letter-spacing:0.205px;">Height</span>
<div role="spinbutton" aria-label="Height" style="position:absolute;left:1097.7px;top:707px;width:64px;height:31.5px;background:#fff;border-radius:3px"></div>
<span class="t" style="left:1107.9px;top:717px;font-size:14px;color:#1b1b1b;letter-spacing:-0.286px;">510</span>
<svg style="position:absolute;left:391px;top:755.5px;overflow:visible;" width="20.5" height="18.5" viewBox="0 0 40 36" preserveAspectRatio="none"><defs><linearGradient id="g10" x1="0" y1="0" x2="1" y2="1"><stop offset="0" stop-color="#ffd95c"/><stop offset=".55" stop-color="#fdc830"/><stop offset="1" stop-color="#f8b414"/></linearGradient>
<linearGradient id="g11" x1="0" y1="0" x2="0" y2="1"><stop offset="0" stop-color="#2590e2"/><stop offset="1" stop-color="#0e62b2"/></linearGradient></defs>
<path d="M0 3 Q0 0 3 0 H13 Q15 0 16 1.200 L19 5 V9 H0z" fill="#dfa20c"/>
<rect x="0" y="4.600" width="40" height="31.400" rx="1.500" fill="url(#g10)"/>
<path d="M0 7.200 H15 L17.500 4.600 H38.500 Q40 4.600 40 6.100 V9 H0z" fill="#ffdf70" opacity=".55"/>
<path d="M0 4.600 H15.500 L13 7.200 H0z" fill="#d99a0a"/>
<path d="M7.500 36 V29.500 Q7.500 25 12 25 H28.500 Q33 25 33 29.500 V36z" fill="url(#g11)"/>
<rect x="13.500" y="29.300" width="13.500" height="2" rx="1" fill="#0a4c90"/></svg>
<span class="t" style="left:451.4px;top:759px;font-size:14px;color:#1b1b1b;letter-spacing:-0.300px;">File Explorer</span>
<div role="button" aria-label="Remove" style="position:absolute;left:1259.7px;top:747.7px;width:100.6px;height:33.6px;background:#fdfdfd;border:1.500px solid #e3e3e3;border-bottom-color:#d6d6d6;border-radius:4.500px;box-sizing:border-box"></div>
<span class="t" style="left:1286px;top:759px;font-size:14px;color:#1b1b1b;letter-spacing:-0.507px;">Remove</span>
<svg style="position:absolute;left:1378px;top:760.500px" width="14" height="9" viewBox="0 0 14 9"><path d="M1.300 1.300 L7 7.100 L12.700 1.300" fill="none" stroke="#333" stroke-width="1.050"/></svg>
<div role="button" aria-label="Cancel" style="position:absolute;left:1151px;top:808px;width:91px;height:34.5px;background:#fdfdfd;border:1.500px solid #e3e3e3;border-bottom-color:#d6d6d6;border-radius:4.500px;box-sizing:border-box"></div>
<span class="t" style="left:1176.3px;top:819px;font-size:14px;color:#1b1b1b;letter-spacing:-0.516px;">Cancel</span>
<div role="button" aria-label="Save Workspace" style="position:absolute;left:1263px;top:807px;width:150px;height:36px;background:#0a78d4;border-radius:3px"></div>
<span class="t" style="left:1288px;top:819px;font-size:14px;color:#fff;letter-spacing:-0.384px;">Save Workspace</span>
</section>
<footer class="grp" role="toolbar" aria-label="Taskbar">
<div style="position:absolute;left:0px;top:1004.7px;width:1687px;height:48.3px;background:linear-gradient(90deg,#d6e9ee 0%,#dce8f0 9%,#e0e1f0 18%,#e3dcf0 27%,#e5d9f1 36%,#ecd6f2 60%,#ecd4f2 100%);border-top:1px solid rgba(236,214,250,.85);box-shadow:0 -1px 0 rgba(30,10,70,.3);box-sizing:border-box"></div>
<svg style="position:absolute;left:21px;top:1017.8px;overflow:visible;" width="23" height="23" viewBox="0 0 23 23" ><defs><linearGradient id="g12" x1="0" y1="0" x2="1" y2="1"><stop offset="0" stop-color="#3cc0f4"/><stop offset="1" stop-color="#0a72d4"/></linearGradient></defs>
<path fill="url(#g12)" d="M0 0H11V11H0zM12 0H23V11H12zM0 12H11V23H0zM12 12H23V23H12z"/></svg>
<div style="position:absolute;left:57.5px;top:1013.3px;width:218.6px;height:31px;background:#f1f5fa;border:1px solid rgba(215,222,232,.8);border-bottom-color:rgba(165,172,188,.75);border-radius:16px;box-sizing:border-box"></div>
<svg style="position:absolute;left:68.9px;top:1022px;overflow:visible;" width="14" height="14" viewBox="0 0 15 15" ><circle cx="6.200" cy="6.200" r="5.200" fill="none" stroke="#262626" stroke-width="1.700"/><path d="M10 10 L14.200 14.200" stroke="#262626" stroke-width="1.900" stroke-linecap="round"/></svg>
<span class="t" style="left:93.9px;top:1023px;font-size:13.6px;color:#565656;letter-spacing:-0.463px;">Search</span>
<svg style="position:absolute;left:230.8px;top:1019.1px;overflow:visible;" width="13.2" height="22.7" viewBox="0 0 13.2 22.7" preserveAspectRatio="none"><defs><linearGradient id="g13" x1="0" y1="0" x2="1" y2="0"><stop offset="0" stop-color="#2a9448"/><stop offset=".45" stop-color="#4cc068"/><stop offset="1" stop-color="#238640"/></linearGradient></defs>
<path d="M6.600 0 L10.200 7 H8.900 L11.900 13.500 H10.600 L13.200 21.300 Q6.600 23.600 0 21.300 L2.600 13.500 H1.300 L4.300 7 H3z" fill="url(#g13)"/>
<path d="M3 7 H10.200 M1.300 13.500 H11.900" stroke="#1f7a3a" stroke-width=".7" opacity=".6"/>
<circle cx="2.100" cy="15.700" r="1" fill="#e8d83c"/><circle cx="8.600" cy="18.400" r="1.100" fill="#d8d838"/><circle cx="10" cy="8" r=".8" fill="#c8c840"/></svg>
<svg style="position:absolute;left:246.2px;top:1019.8px;overflow:visible;" width="20.4" height="22" viewBox="0 0 20.4 22" preserveAspectRatio="none"><path d="M17.300 1.500 L20.200 7.500 V21.300 H17.300z" fill="#e4beb0"/>
<rect x="1.300" y="7.300" width="16.200" height="14.200" fill="#f0eeec"/>
<path d="M1.600 0 H18.300 L20.300 7.600 H0z" fill="#d8601e"/>
<path d="M0 7.600 H20.300 L20 6.300 H.3z" fill="#b84a18"/>
<path d="M1.800 7.600 V21.500 M9.400 7.600 V21.500 M17 7.600 V21.500 M1.300 14.400 H17.500 M1.300 21.200 H17.500 M1.800 8 L4.300 14 M9.400 8 L6.900 14 M9.400 8 L11.900 14 M17 8 L14.500 14 M1.800 15 L4.300 21 M9.400 15 L6.900 21 M9.400 15 L11.900 21 M17 15 L14.500 21" stroke="#5c2a20" stroke-width=".8" fill="none"/>
<rect x="3.800" y="12" width="3.800" height="1.800" rx=".8" fill="#3aa050"/><rect x="8.600" y="14" width="1.600" height="2" fill="#b02030"/>
<circle cx="20.200" cy="6.800" r=".7" fill="#2a1a14"/></svg>
<svg style="position:absolute;left:288.5px;top:1017.6px;overflow:visible;" width="24.6" height="22" viewBox="0 0 24.6 22" preserveAspectRatio="none"><defs>
<linearGradient id="g14" x1="3" y1="1" x2="3" y2="17" gradientUnits="userSpaceOnUse"><stop offset="0" stop-color="#1c8ee6"/><stop offset=".3" stop-color="#20a8c8"/><stop offset=".55" stop-color="#38c488"/><stop offset=".78" stop-color="#b4d428"/><stop offset="1" stop-color="#f4c416"/></linearGradient>
<linearGradient id="g15" x1="12" y1="0" x2="18" y2="5" gradientUnits="userSpaceOnUse"><stop offset="0" stop-color="#1e7ae0"/><stop offset="1" stop-color="#1446b8"/></linearGradient>
<linearGradient id="g16" x1="20" y1="6" x2="14" y2="22" gradientUnits="userSpaceOnUse"><stop offset="0" stop-color="#b462ec"/><stop offset=".45" stop-color="#ee5ea8"/><stop offset="1" stop-color="#fa8a3a"/></linearGradient>
<linearGradient id="g17" x1="7" y1="17" x2="12" y2="22" gradientUnits="userSpaceOnUse"><stop offset="0" stop-color="#f2502a"/><stop offset="1" stop-color="#f87a30"/></linearGradient>
</defs>
<path d="M5 1.300 Q5.600 .5 7 .5 H15 Q17.600 .5 17.800 3 Q16 3.500 14 5.500 Q12 8 10.500 13 Q9.500 16.700 7 16.900 H3.500 Q.3 16.600 1 13.500 Q2.300 6.500 5 1.300z" fill="url(#g14)"/>
<path d="M11 .5 H15 Q17.600 .5 17.800 3 L18.300 5.800 Q15.500 6 14 8.500 Q13.500 4.500 11 .5z" fill="url(#g15)"/>
<path d="M19.600 20.700 Q19 21.500 17.600 21.500 H9.600 Q7 21.500 6.800 19 Q8.600 18.500 10.600 16.500 Q12.600 14 14.100 9 Q15.100 5.300 17.600 5.100 H21.100 Q24.300 5.400 23.600 8.500 Q22.300 15.500 19.600 20.700z" fill="url(#g16)"/>
<path d="M13.600 21.500 H9.600 Q7 21.500 6.800 19 L6.300 16.200 Q9.100 16 10.600 13.500 Q11.100 17.500 13.600 21.500z" fill="url(#g17)"/></svg>
<svg style="position:absolute;left:332.8px;top:1017.6px;overflow:visible;" width="24.3" height="21.6" viewBox="0 0 40 36" preserveAspectRatio="none"><defs><linearGradient id="g18" x1="0" y1="0" x2="1" y2="1"><stop offset="0" stop-color="#ffd95c"/><stop offset=".55" stop-color="#fdc830"/><stop offset="1" stop-color="#f8b414"/></linearGradient>
<linearGradient id="g19" x1="0" y1="0" x2="0" y2="1"><stop offset="0" stop-color="#2590e2"/><stop offset="1" stop-color="#0e62b2"/></linearGradient></defs>
<path d="M0 3 Q0 0 3 0 H13 Q15 0 16 1.200 L19 5 V9 H0z" fill="#dfa20c"/>
<rect x="0" y="4.600" width="40" height="31.400" rx="1.500" fill="url(#g18)"/>
<path d="M0 7.200 H15 L17.500 4.600 H38.500 Q40 4.600 40 6.100 V9 H0z" fill="#ffdf70" opacity=".55"/>
<path d="M0 4.600 H15.500 L13 7.200 H0z" fill="#d99a0a"/>
<path d="M7.500 36 V29.500 Q7.500 25 12 25 H28.500 Q33 25 33 29.500 V36z" fill="url(#g19)"/>
<rect x="13.500" y="29.300" width="13.500" height="2" rx="1" fill="#0a4c90"/></svg>
<svg style="position:absolute;left:376.8px;top:1016.6px;overflow:visible;" width="25.4" height="25.4" viewBox="0 0 256 256" ><defs>
<linearGradient id="g20" x1="63" y1="177" x2="241" y2="177" gradientUnits="userSpaceOnUse"><stop offset="0" stop-color="#0c59a4"/><stop offset="1" stop-color="#114a8b"/></linearGradient>
<linearGradient id="g21" x1="157" y1="100" x2="46" y2="221" gradientUnits="userSpaceOnUse"><stop offset="0" stop-color="#1b9de2"/><stop offset=".16" stop-color="#1595df"/><stop offset=".67" stop-color="#0680d7"/><stop offset="1" stop-color="#0078d4"/></linearGradient>
<radialGradient id="g22" cx="0" cy="0" r="1" gradientUnits="userSpaceOnUse" gradientTransform="matrix(-8 202 -431 -17 26 47)"><stop offset="0" stop-color="#35c1f1"/><stop offset=".11" stop-color="#34c1ed"/><stop offset=".23" stop-color="#2fc2df"/><stop offset=".31" stop-color="#2bc3d2"/><stop offset=".5" stop-color="#45cc78"/><stop offset=".66" stop-color="#74da4c"/><stop offset=".85" stop-color="#8ae04a"/></radialGradient>
</defs>
<path fill="url(#g20)" d="M235.7 195.5a93.7 93.7 0 0 1-10.6 4.7 101.9 101.9 0 0 1-35.9 6.4c-47.3 0-88.500-32.500-88.500-74.300a31.500 31.500 0 0 1 16.400-27.300c-42.800 1.800-53.800 46.400-53.800 72.500 0 74 68.100 81.400 82.800 81.400 7.900 0 19.800-2.300 27-4.600l1.300-.4a128.300 128.300 0 0 0 66.600-52.800 4 4 0 0 0-5.300-5.600z"/>
<path fill="url(#g21)" d="M105.700 241.400a79.200 79.200 0 0 1-22.700-21.300 80.700 80.700 0 0 1 29.500-120c3.200-1.500 8.500-4.100 15.600-4a32.400 32.400 0 0 1 25.700 13 31.900 31.900 0 0 1 6.300 18.700c0-.2 24.500-79.600-80-79.600-43.900 0-80 41.600-80 78.200a130.200 130.200 0 0 0 12.100 56 128 128 0 0 0 156.400 67 75.500 75.500 0 0 1-62.800-8z"/>
<path fill="url(#g22)" d="M152.300 148.900c-.9 1-3.400 2.500-3.400 5.600 0 2.600 1.700 5.200 4.800 7.300 14.300 10 41.400 8.600 41.500 8.600a59.600 59.600 0 0 0 30.300-8.300 61.400 61.400 0 0 0 30.400-52.900c.3-22.400-8-37.300-11.300-43.900C223.500 24.100 178.200 0 128 0A128 128 0 0 0 0 126.200c.5-36.500 36.800-66 80-66 3.500 0 23.500.3 42 10 16.300 8.600 24.900 19 30.800 29.300 6.200 10.700 7.300 24.100 7.300 29.500 0 5.300-2.700 13.300-7.800 19.900z"/></svg>
<svg style="position:absolute;left:420.9px;top:1016.8px;overflow:visible;" width="24.4" height="24.4" viewBox="-12.2 -12.2 24.4 24.4" ><defs><linearGradient id="g23" x1="0" y1="-12" x2="0" y2="12" gradientUnits="userSpaceOnUse"><stop offset="0" stop-color="#8b9199"/><stop offset="1" stop-color="#72787f"/></linearGradient></defs>
<g fill="url(#g23)"><circle r="9.600"/><rect x="5" y="-3.700" width="7.100" height="7.400" rx="2.900" transform="rotate(0)"/><rect x="5" y="-3.700" width="7.100" height="7.400" rx="2.900" transform="rotate(60)"/><rect x="5" y="-3.700" width="7.100" height="7.400" rx="2.900" transform="rotate(120)"/><rect x="5" y="-3.700" width="7.100" height="7.400" rx="2.900" transform="rotate(180)"/><rect x="5" y="-3.700" width="7.100" height="7.400" rx="2.900" transform="rotate(240)"/><rect x="5" y="-3.700" width="7.100" height="7.400" rx="2.900" transform="rotate(300)"/></g>
<circle r="6.300" fill="#dcecfb"/><circle r="4.300" fill="#1c62c6"/></svg>
<svg style="position:absolute;left:465px;top:1020px;overflow:visible;" width="24" height="18" viewBox="0 0 24 18" preserveAspectRatio="none"><rect x="0" y="0" width="24" height="18" rx="1" fill="#383838"/>
<rect x="0" y="0" width="8" height="2.700" fill="#d2d2d2"/><rect x="8" y="0" width="8" height="2.700" fill="#8c8c8c"/><rect x="16" y="0" width="8" height="2.700" fill="#585858"/>
<path d="M3 6.500 L8.500 10.500 L3 14.500" fill="none" stroke="#d4d4d4" stroke-width="2.100"/>
<rect x="9.800" y="12.800" width="14.200" height="5.200" fill="#4ad8f8"/></svg>
<svg style="position:absolute;left:512px;top:1020px;overflow:visible;" width="18" height="18" viewBox="0 0 18 18" preserveAspectRatio="none"><rect x="0" y="0" width="18" height="18" rx=".8" fill="#5a524c"/>
<rect x="3" y="2" width="2.500" height="9" fill="#e23c20"/><rect x="5.500" y="2" width="2.400" height="9" fill="#f29a18"/><rect x="7.900" y="2" width="2.400" height="9" fill="#f2e222"/><rect x="10.300" y="2" width="2.400" height="9" fill="#34b444"/><rect x="12.700" y="2" width="2.500" height="9" fill="#2a7ad8"/>
<rect x="3" y="13" width="2.800" height="2.900" fill="#f4eede"/><rect x="7.500" y="13" width="2.800" height="2.900" fill="#f4eede"/><rect x="12.200" y="13" width="2.800" height="2.900" fill="#f4eede"/></svg>
<div style="position:absolute;left:545.8px;top:1009.8px;width:38.6px;height:38.2px;background:rgba(255,255,255,.5);border:1px solid rgba(255,255,255,.55);border-radius:5px;box-sizing:border-box"></div>
<svg style="position:absolute;left:552.5px;top:1016.2px;overflow:visible;" width="25" height="25" viewBox="0 0 25 25" ><defs><linearGradient id="g24" x1="0" y1="0" x2="1" y2="1"><stop offset="0" stop-color="#52bff2"/><stop offset="1" stop-color="#2f9fe2"/></linearGradient></defs>
<g transform="translate(0 1.600) skewY(-7)">
<path d="M13.300 1.200 H5 Q.9 1.200 .9 5.300 V11.500 Q.9 15 3.800 15.600 L12 15 L15 6z" fill="rgba(232,249,253,.85)" stroke="none"/><path d="M18 5.600 H10 Q5.900 5.600 5.900 9.700 V16 Q5.900 19.400 8.800 20 L14 19 L19 10z" fill="rgba(232,249,253,.85)" stroke="none"/><path d="M13.300 1.200 H5 Q.9 1.200 .9 5.300 V11.500 Q.9 15 3.800 15.600" fill="none" stroke="#1c4272" stroke-width="1.500" stroke-linecap="round"/>
<path d="M18 5.600 H10 Q5.900 5.600 5.900 9.700 V16 Q5.900 19.400 8.800 20" fill="none" stroke="#2a72ba" stroke-width="1.500" stroke-linecap="round"/>
<rect x="10.200" y="9.600" width="14.300" height="15" rx="3.800" fill="url(#g24)"/>
</g></svg>
<div style="position:absolute;left:342px;top:1045px;width:6px;height:2.5px;background:#7d7d84;border-radius:2px"></div>
<div style="position:absolute;left:386px;top:1045px;width:6px;height:2.5px;background:#7d7d84;border-radius:2px"></div>
<div style="position:absolute;left:474px;top:1045px;width:6px;height:2.5px;background:#7d7d84;border-radius:2px"></div>
<div style="position:absolute;left:518px;top:1045px;width:6px;height:2.5px;background:#7d7d84;border-radius:2px"></div>
<div style="position:absolute;left:557.2px;top:1045.1px;width:15.5px;height:3px;background:#0a66b8;border-radius:2px"></div>
<svg style="position:absolute;left:1534px;top:1026px;overflow:visible;" width="10" height="6" viewBox="0 0 10 6" ><path d="M.8 5.300 L5 1 L9.200 5.300" fill="none" stroke="#1a1a1a" stroke-width="1.500" stroke-linecap="round" stroke-linejoin="round"/></svg>
<svg style="position:absolute;left:1562.8px;top:1023px;overflow:visible;" width="16.3" height="11" viewBox="0 0 16.300 11" preserveAspectRatio="none"><defs><linearGradient id="g25" x1="3" y1="1" x2="12" y2="11" gradientUnits="userSpaceOnUse"><stop offset="0" stop-color="#8c8c8c"/><stop offset=".45" stop-color="#a8a8a8"/><stop offset=".55" stop-color="#dedede"/><stop offset="1" stop-color="#fafafa"/></linearGradient></defs>
<path d="M4 10.300 Q.6 10.300 .6 7.200 Q.6 4.300 3.500 4 Q4.600 .6 8 .6 Q11 .6 12.200 3.600 Q15.700 3.800 15.700 7 Q15.700 10.300 12.500 10.300z" fill="url(#g25)" stroke="#3a3a3a" stroke-width="1"/></svg>
<svg style="position:absolute;left:1594.7px;top:1020.9px;overflow:visible;" width="16.3" height="15.7" viewBox="0 0 16.300 15.700" preserveAspectRatio="none"><path d="M11.300 1.200 H1.300 Q.6 1.200 .6 1.900 V11.300 Q.6 12 1.300 12 H11.600" fill="none" stroke="#1a1a1a" stroke-width="1.100"/>
<path d="M5.200 12 V15 M9.300 12 V15 M3 15.100 H12" fill="none" stroke="#1a1a1a" stroke-width="1.100"/>
<rect x="11.900" y=".6" width="3.500" height="5.400" rx="1.300" fill="#efe4f4" stroke="#1a1a1a" stroke-width="1.100"/>
<path d="M13.650 6 V15.600" stroke="#1a1a1a" stroke-width="1.100"/></svg>
<svg style="position:absolute;left:1619px;top:1023.3px;overflow:visible;" width="15.8" height="11.1" viewBox="0 0 15.800 11.100" preserveAspectRatio="none"><path d="M.7 4 H3.500 L6.700 .8 V10.300 L3.500 7.200 H.7z" fill="none" stroke="#1a1a1a" stroke-width="1.200" stroke-linejoin="round"/>
<path d="M8.800 3.200 Q10.300 5.500 8.800 7.900" fill="none" stroke="#1a1a1a" stroke-width="1.200" stroke-linecap="round"/>
<path d="M10.800 1.600 Q13.300 5.500 10.800 9.500" fill="none" stroke="#1a1a1a" stroke-width="1.200" stroke-linecap="round"/>
<path d="M12.900 .3 Q16.300 5.500 12.900 10.800" fill="none" stroke="#b8b0c0" stroke-width="1.100" stroke-linecap="round"/></svg>
<svg style="position:absolute;left:1652.8px;top:1021.8px;overflow:visible;will-change:transform" width="13" height="15" viewBox="0 0 13 15" preserveAspectRatio="none"><path d="M.4 11.800 Q2.300 10 2.300 6.300 Q2.300 1 6.400 1 Q10.500 1 10.500 6.300 Q10.500 10 12.400 11.800z" fill="#1a1a1a"/>
<path d="M4.600 13 Q6.400 15.300 8.200 13z" fill="#1a1a1a"/>
<text x="3.600" y="8.600" font-family="Liberation Sans, sans-serif" font-size="7.200" font-weight="700" fill="#f4e8f8">z</text>
<text x="8" y="5" font-family="Liberation Sans, sans-serif" font-size="7.200" font-weight="700" fill="#1a1a1a" stroke="#ebd5f2" stroke-width=".7" paint-order="stroke">Z</text></svg>
</footer>
</body></html>
